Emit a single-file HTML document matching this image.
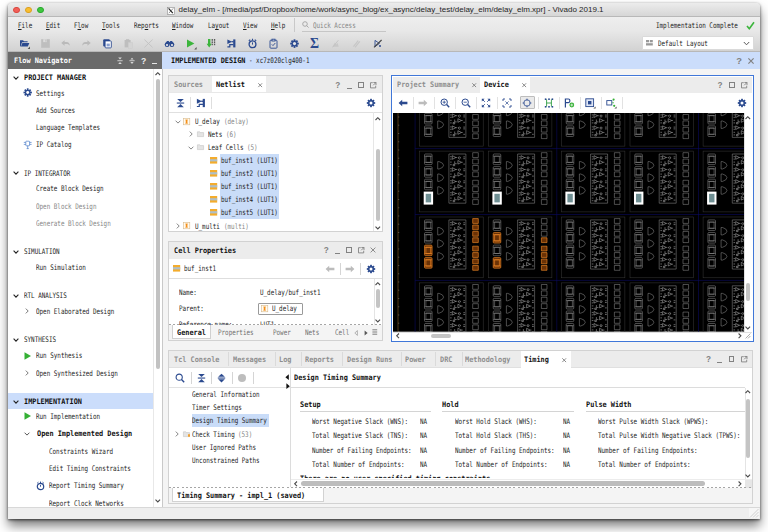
<!DOCTYPE html><html><head><meta charset="utf-8"><title>delay_elm - Vivado 2019.1</title><style>
*{box-sizing:border-box;margin:0;padding:0}
html,body{width:768px;height:532px;background:#fff;overflow:hidden}
body{position:relative;font-family:"DejaVu Sans Mono","Liberation Mono",monospace;font-size:7.6px;color:#222}
.a{position:absolute}
.t{position:absolute;white-space:pre;line-height:10px;height:10px;transform-origin:0 50%;transform:scaleX(0.7781);color:#222}
.b{font-weight:bold;transform:scaleX(0.9049);color:#111}
.g{color:#868686}
.w{color:#fff}
.u{text-decoration:underline}
#win{left:8px;top:2.7px;width:752px;height:516.3px;background:#f4f4f4;box-shadow:0 7px 11px rgba(0,0,0,.5),0 1px 3px rgba(0,0,0,.65);border-radius:4px 4px 0 0;overflow:hidden}
#title{left:0;top:0;width:752px;height:13.9px;background:linear-gradient(#ececec,#d6d6d6);border-bottom:.5px solid #b8b8b8}
#title span{position:absolute;left:170.6px;top:2.7px;font:8px "Liberation Sans",sans-serif;color:#262626;white-space:pre;line-height:10px}
.dot{position:absolute;top:4px;width:6.6px;height:6.6px;border-radius:50%}
#menubar{left:0;top:13.9px;width:752px;height:35.8px;background:linear-gradient(#eeeeee,#e8e8e8 40%,#d2d2d2);border-bottom:.6px solid #b8b8b8}
.panel{position:absolute;background:#fff;border:.5px solid #c8c8c8}
.tabbar{position:absolute;left:0;top:0;right:0;background:#ececec;border-bottom:.5px solid #d0d0d0}
.tab{position:absolute;top:0;background:#fff;height:100%}
.sel{position:absolute;background:#c9dcf8}
.sb{position:absolute;background:#c4c4c4;border-radius:2.5px}
.vs{position:absolute;width:.5px;background:#d0d0d0}
svg{position:absolute;overflow:visible}
</style></head><body>
<div class="a" id="win">
<div class="a" id="title"><span>delay_elm - [/media/psf/Dropbox/home/work/async_blog/ex_async/delay_test/delay_elm/delay_elm.xpr] - Vivado 2019.1</span></div>
<div class="a" id="menubar"></div>
</div>
<div class="dot" style="left:13.2px;top:6.6px;background:#f25f58;border:.5px solid #d9473f"></div>
<div class="dot" style="left:25.1px;top:6.6px;background:#f9bd2f;border:.5px solid #d9a022"></div>
<div class="dot" style="left:37.0px;top:6.6px;background:#3fc73f;border:.5px solid #2aa82f"></div>
<svg style="left:166.5px;top:6.7px" width="8" height="7.6" viewBox="0 0 8 7.6"><rect x=".3" y=".3" width="7.4" height="7" fill="#fff" stroke="#8a8a8a" stroke-width=".6"/><path d="M1.6 1.4L5.8 6.2" stroke="#222" stroke-width="1.2"/><path d="M6.2 1.4L1.8 6.2" stroke="#222" stroke-width=".5"/></svg>
<div class="t" style="left:18.2px;top:21.1px;"><span class="u">F</span>ile</div>
<div class="t" style="left:46.2px;top:21.1px;"><span class="u">E</span>dit</div>
<div class="t" style="left:74.2px;top:21.1px;">F<span class="u">l</span>ow</div>
<div class="t" style="left:102.2px;top:21.1px;"><span class="u">T</span>ools</div>
<div class="t" style="left:134.0px;top:21.1px;">Rep<span class="u">o</span>rts</div>
<div class="t" style="left:172.0px;top:21.1px;"><span class="u">W</span>indow</div>
<div class="t" style="left:207.5px;top:21.1px;">La<span class="u">y</span>out</div>
<div class="t" style="left:243.0px;top:21.1px;"><span class="u">V</span>iew</div>
<div class="t" style="left:270.5px;top:21.1px;"><span class="u">H</span>elp</div>
<div class="a" style="left:294.3px;top:18.0px;width:0.5px;height:14.0px;background:#c9c9c9;"></div>
<svg style="left:302.0px;top:21.0px" width="8" height="8" viewBox="0 0 8 8"><circle cx="3" cy="3" r="2.3" fill="none" stroke="#999" stroke-width=".8"/><path d="M4.7 4.7L6.6 6.6" stroke="#999" stroke-width=".8"/></svg>
<div class="t g" style="left:312.5px;top:20.6px;">Quick Access</div>
<div class="a" style="left:301.7px;top:30.9px;width:84.0px;height:0.6px;background:#c6c6c6;"></div>
<div class="t" style="left:656.3px;top:21.1px;">Implementation Complete</div>
<svg style="left:746.3px;top:20.6px" width="9" height="9" viewBox="0 0 9 9"><path d="M1 5L3.3 7.8L8 1.2" fill="none" stroke="#3cb53c" stroke-width="1.6" stroke-linejoin="round"/></svg>
<div class="a" style="left:642.2px;top:36.2px;width:112.3px;height:14.2px;background:#fff;border:.5px solid #dadada;border-radius:1px"></div>
<svg style="left:646.3px;top:40.0px" width="7" height="6" viewBox="0 0 7 6"><rect x="0" y="0" width="3" height="2.3" fill="#999"/><rect x="3.8" y="0" width="3" height="2.3" fill="#999"/><rect x="0" y="3.2" width="6.8" height="2.3" fill="#999"/></svg>
<div class="t" style="left:657.5px;top:38.9px;">Default Layout</div>
<svg style="left:742.5px;top:41.2px" width="7" height="5" viewBox="0 0 7 5"><path d="M.8 1L3.5 3.8L6.2 1" fill="none" stroke="#5a5a5a" stroke-width="1"/></svg>
<div class="a" style="left:8.0px;top:52.0px;width:154.0px;height:16.6px;background:#6a6a6a;"></div>
<div class="t b w" style="left:13.8px;top:56.3px;">Flow Navigator</div>
<div class="a" style="left:8.0px;top:69.0px;width:154.0px;height:438.0px;background:#fff;"></div>
<div class="a" style="left:153.4px;top:69.0px;width:0.5px;height:438.0px;background:#e8e8e8;"></div>
<div class="sb" style="left:155.5px;top:79.2px;width:4.7px;height:290px;background:#c2c2c2"></div>
<div class="a" style="left:8.0px;top:393.3px;width:145.4px;height:15.8px;background:#cbddfb;"></div>
<svg style="left:12.5px;top:75.8px" width="6" height="4" viewBox="0 0 6 4"><path d="M.6 .7L3 3.1L5.4 .7" fill="none" stroke="#222" stroke-width="1.1"/></svg>
<div class="t b" style="left:24.0px;top:73.1px;">PROJECT MANAGER</div>
<div class="t" style="left:36.3px;top:88.6px;">Settings</div>
<svg style="left:23.3px;top:88.4px" width="9" height="9" viewBox="0 0 9 9"><g transform="translate(4.7 4.5)"><g fill="#2b4a8f"><rect x="-.85" y="-4.2" width="1.7" height="8.4" transform="rotate(0)"/><rect x="-.85" y="-4.2" width="1.7" height="8.4" transform="rotate(45)"/><rect x="-.85" y="-4.2" width="1.7" height="8.4" transform="rotate(90)"/><rect x="-.85" y="-4.2" width="1.7" height="8.4" transform="rotate(135)"/><circle r="2.8"/></g><circle r="1.45" fill="#fff"/></g></svg>
<div class="t" style="left:36.3px;top:105.9px;">Add Sources</div>
<div class="t" style="left:36.3px;top:123.1px;">Language Templates</div>
<div class="t" style="left:36.3px;top:140.4px;">IP Catalog</div>
<svg style="left:23.0px;top:140.0px" width="9" height="10" viewBox="0 0 9 10"><g fill="none" stroke="#4a7cc8" stroke-width=".7"><rect x="2.8" y="1.2" width="3.8" height="4.6" rx=".6"/><path d="M.8 2.4H2.8M.8 4.4H2.8M6.6 2.4H8.6M6.6 4.4H8.6M4.7 5.8V8.6M3.6 8.6H5.8"/></g></svg>
<svg style="left:12.5px;top:171.3px" width="6" height="4" viewBox="0 0 6 4"><path d="M.6 .7L3 3.1L5.4 .7" fill="none" stroke="#222" stroke-width="1.1"/></svg>
<div class="t" style="left:24.0px;top:168.6px;">IP INTEGRATOR</div>
<div class="t" style="left:36.3px;top:184.4px;">Create Block Design</div>
<div class="t g" style="left:36.3px;top:201.6px;">Open Block Design</div>
<div class="t g" style="left:36.3px;top:218.9px;">Generate Block Design</div>
<svg style="left:12.5px;top:250.0px" width="6" height="4" viewBox="0 0 6 4"><path d="M.6 .7L3 3.1L5.4 .7" fill="none" stroke="#222" stroke-width="1.1"/></svg>
<div class="t" style="left:24.0px;top:247.3px;">SIMULATION</div>
<div class="t" style="left:36.3px;top:262.9px;">Run Simulation</div>
<svg style="left:12.5px;top:294.1px" width="6" height="4" viewBox="0 0 6 4"><path d="M.6 .7L3 3.1L5.4 .7" fill="none" stroke="#222" stroke-width="1.1"/></svg>
<div class="t" style="left:24.0px;top:291.4px;">RTL ANALYSIS</div>
<svg style="left:24.5px;top:308.3px" width="4" height="6" viewBox="0 0 4 6"><path d="M.8 .6L3.2 3L.8 5.4" fill="none" stroke="#555" stroke-width="0.8"/></svg>
<div class="t" style="left:36.2px;top:306.9px;">Open Elaborated Design</div>
<svg style="left:12.5px;top:338.1px" width="6" height="4" viewBox="0 0 6 4"><path d="M.6 .7L3 3.1L5.4 .7" fill="none" stroke="#222" stroke-width="1.1"/></svg>
<div class="t" style="left:24.0px;top:335.4px;">SYNTHESIS</div>
<div class="t" style="left:36.3px;top:351.1px;">Run Synthesis</div>
<svg style="left:24.0px;top:351.5px" width="8" height="8" viewBox="0 0 8 8"><path d="M.5 .3L7 4L.5 7.7Z" fill="#35b035"/></svg>
<svg style="left:24.5px;top:369.9px" width="4" height="6" viewBox="0 0 4 6"><path d="M.8 .6L3.2 3L.8 5.4" fill="none" stroke="#555" stroke-width="0.8"/></svg>
<div class="t" style="left:36.2px;top:368.5px;">Open Synthesized Design</div>
<svg style="left:12.5px;top:399.5px" width="6" height="4" viewBox="0 0 6 4"><path d="M.6 .7L3 3.1L5.4 .7" fill="none" stroke="#222" stroke-width="1.1"/></svg>
<div class="t b" style="left:24.0px;top:396.8px;">IMPLEMENTATION</div>
<div class="t" style="left:36.3px;top:412.0px;">Run Implementation</div>
<svg style="left:24.0px;top:412.4px" width="8" height="8" viewBox="0 0 8 8"><path d="M.5 .3L7 4L.5 7.7Z" fill="#35b035"/></svg>
<svg style="left:23.7px;top:432.1px" width="6" height="4" viewBox="0 0 6 4"><path d="M.6 .7L3 3.1L5.4 .7" fill="none" stroke="#444" stroke-width="0.9"/></svg>
<div class="t b" style="left:36.7px;top:429.4px;">Open Implemented Design</div>
<div class="t" style="left:48.9px;top:446.9px;">Constraints Wizard</div>
<div class="t" style="left:48.9px;top:464.2px;">Edit Timing Constraints</div>
<div class="t" style="left:48.9px;top:481.4px;">Report Timing Summary</div>
<svg style="left:35.5px;top:480.8px" width="9" height="10" viewBox="0 0 9 10"><g fill="none" stroke="#2b4a8f"><circle cx="4.5" cy="5.5" r="3.2" stroke-width="1.2"/><path d="M4.5 3.8V5.7" stroke-width=".9"/><path d="M1.2 2.2L2.4 1.2M7.8 2.2L6.6 1.2M4.5 .6V2" stroke-width="1"/></g></svg>
<div class="t" style="left:48.9px;top:498.6px;">Report Clock Networks</div>
<div class="a" style="left:8.0px;top:507.0px;width:752.0px;height:12.0px;background:#eeeeee;"></div>
<div class="a" style="left:8.0px;top:506.7px;width:752.0px;height:0.5px;background:#d8d8d8;"></div>
<div class="a" style="left:162.0px;top:52.0px;width:598.0px;height:16.6px;background:#cbddfb;"></div>
<div class="t b" style="left:170.5px;top:56.3px;">IMPLEMENTED DESIGN</div>
<div class="t" style="left:248.7px;top:56.3px;">- xc7z020clg400-1</div>
<svg style="left:18.8px;top:38.0px" width="11" height="11" viewBox="0 0 11 11"><path d="M1 2.2H4L5 3.2H8.6V4.3H3L1.6 8.4H1Z" fill="#2b4a8f"/><path d="M3.4 5H10.4L8.8 8.6H1.9Z" fill="#2b4a8f"/><path d="M8.6 11L11 11L11 8.6Z" fill="#555"/></svg>
<svg style="left:39.5px;top:38.0px" width="11" height="11" viewBox="0 0 11 11"><path d="M1.2 1.2H9.8V9.8H1.2Z" fill="#bebebe"/><rect x="3.2" y="1.2" width="3.8" height="2.9" fill="#dcdcdc"/><rect x="5.4" y="1.6" width="1.1" height="2.1" fill="#bebebe"/></svg>
<svg style="left:60.3px;top:38.0px" width="11" height="11" viewBox="0 0 11 11"><path d="M1.2 5L4.6 2.2V4H6.5C8.6 4 9.8 5.4 9.8 7.8C9 6.5 8 6 6.5 6H4.6V7.8Z" fill="#bababa"/></svg>
<svg style="left:81.0px;top:38.0px" width="11" height="11" viewBox="0 0 11 11"><path d="M9.8 5L6.4 2.2V4H4.5C2.4 4 1.2 5.4 1.2 7.8C2 6.5 3 6 4.5 6H6.4V7.8Z" fill="#bababa"/></svg>
<svg style="left:101.8px;top:38.0px" width="11" height="11" viewBox="0 0 11 11"><rect x="1.2" y="1.2" width="6.6" height="7.4" rx="1" fill="#2b4a8f"/><rect x="3.1" y="2.9" width="6.2" height="7" rx=".8" fill="#fff" stroke="#2b4a8f" stroke-width=".9"/><rect x="4.6" y="5.6" width="3.2" height="2.8" fill="#8aa0cf"/></svg>
<svg style="left:122.6px;top:38.0px" width="11" height="11" viewBox="0 0 11 11"><rect x="1.6" y="2" width="6" height="7.4" fill="#bebebe"/><rect x="3" y="1.2" width="3.2" height="1.6" fill="#bebebe"/><rect x="5.2" y="4.4" width="4.4" height="5.8" fill="#d4d4d4" stroke="#c8c8c8" stroke-width=".4"/></svg>
<svg style="left:143.3px;top:38.0px" width="11" height="11" viewBox="0 0 11 11"><path d="M1.4 1.6L9.6 9.4M9.6 1.6L1.4 9.4" stroke="#c2c2c2" stroke-width=".9" fill="none"/></svg>
<svg style="left:164.1px;top:38.0px" width="11" height="11" viewBox="0 0 11 11"><g fill="#2b4a8f"><ellipse cx="3.1" cy="6.4" rx="2.4" ry="2.5"/><ellipse cx="7.9" cy="6.4" rx="2.4" ry="2.5"/><path d="M2 4.4L3 2.9H4.6L5.5 4.2L6.4 2.9H8L9 4.4V6H2Z"/></g><ellipse cx="3" cy="7" rx="1.1" ry="1" fill="#e8e8e8"/><ellipse cx="8" cy="7" rx="1.1" ry="1" fill="#e8e8e8"/></svg>
<svg style="left:184.8px;top:38.0px" width="11" height="11" viewBox="0 0 11 11"><path d="M2 1.4L9.4 5.4L2 9.4Z" fill="#3cb53c"/><path d="M9.2 11.4L11.6 11.4L11.6 9Z" fill="#555"/></svg>
<svg style="left:205.6px;top:38.0px" width="11" height="11" viewBox="0 0 11 11"><path d="M2 1H4.4V5.8H5.8L3.2 9.4L.6 5.8H2Z" fill="#3cb53c"/><g fill="#5a5a5a"><rect x="5.6" y="1" width="1.3" height="1.8"/><rect x="7.9" y="1" width="1.3" height="1.8"/><rect x="5.6" y="3.4" width="1.3" height="1.8"/><rect x="7.9" y="3.4" width="1.3" height="1.8"/><rect x="5.6" y="5.8" width="1.3" height="1.4"/><rect x="7.9" y="5.8" width="1.3" height="1.4"/></g></svg>
<svg style="left:226.3px;top:38.0px" width="11" height="11" viewBox="0 0 11 11"><g fill="#2b4a8f"><rect x="7.2" y="1.4" width="2.2" height="8"/><path d="M1.4 1.4L6.2 3.7L1.4 6Z"/><rect x="5.6" y="3.1" width="2" height="1.2"/></g><path d="M1.4 8.8H3.8V6.6H7.4" fill="none" stroke="#2b4a8f" stroke-width="1.2"/></svg>
<svg style="left:247.1px;top:38.0px" width="11" height="11" viewBox="0 0 11 11"><g fill="none" stroke="#2b4a8f"><circle cx="5.5" cy="6.3" r="3.4" stroke-width="1.3"/><path d="M5.5 4.4V6.6" stroke-width="1"/><path d="M1.8 2.8L3.2 1.6M9.2 2.8L7.8 1.6M5.5 .8V2.6" stroke-width="1.1"/></g></svg>
<svg style="left:267.8px;top:38.0px" width="11" height="11" viewBox="0 0 11 11"><g fill="none" stroke="#2b4a8f" stroke-width=".9"><rect x="2" y="2.2" width="7" height="8" rx=".8"/><rect x="4" y="1.2" width="3" height="1.8" fill="#e8e8e8"/><path d="M3.8 6.4L5 7.6L7.3 5"/></g></svg>
<svg style="left:288.6px;top:38.0px" width="11" height="11" viewBox="0 0 11 11"><g transform="translate(5.5 5.6)"><g fill="#2b4a8f"><rect x="-.9" y="-4.3" width="1.8" height="8.6" transform="rotate(0)"/><rect x="-.9" y="-4.3" width="1.8" height="8.6" transform="rotate(45)"/><rect x="-.9" y="-4.3" width="1.8" height="8.6" transform="rotate(90)"/><rect x="-.9" y="-4.3" width="1.8" height="8.6" transform="rotate(135)"/><circle r="3"/></g><circle r="1.55" fill="#e6e6e6"/></g></svg>
<svg style="left:309.3px;top:38.0px" width="11" height="11" viewBox="0 0 11 11"><text x=".9" y="10.2" font-family="Liberation Serif,serif" font-weight="bold" font-size="13.8" fill="#2b4a8f">Σ</text></svg>
<svg style="left:330.1px;top:38.0px" width="11" height="11" viewBox="0 0 11 11"><path d="M2.4 8.8L5 4.4L6.2 6.4L7.6 5L8.8 8.8Z" fill="#c8c8c8"/><path d="M2.6 9.4L8.4 2.2" stroke="#c2c2c2" stroke-width=".8"/></svg>
<svg style="left:350.8px;top:38.0px" width="11" height="11" viewBox="0 0 11 11"><path d="M2.4 8.6L7.2 2.6M4 9.4L8.8 3.4" stroke="#c6c6c6" stroke-width="1.1"/></svg>
<svg style="left:371.6px;top:38.0px" width="11" height="11" viewBox="0 0 11 11"><path d="M3 2.4L7.4 5.4L3 8.6Z" fill="none" stroke="#2b4a8f" stroke-width=".9"/><circle cx="8" cy="8" r="1" fill="#2b4a8f"/><path d="M2 9.4L9.6 2" stroke="#444" stroke-width="1.1"/></svg>
<div class="a" style="left:162.0px;top:69.0px;width:0.5px;height:438.0px;background:#c9c9c9;"></div>
<svg style="left:155.2px;top:72.0px" width="5.6" height="3.6" viewBox="0 0 5.6 3.6"><path d="M.5 3L2.8 .7L5.1 3" fill="none" stroke="#4a4a4a" stroke-width="1.1"/></svg>
<svg style="left:155.2px;top:498.7px" width="5.6" height="3.6" viewBox="0 0 5.6 3.6"><path d="M.5 .6L2.8 2.9L5.1 .6" fill="none" stroke="#4a4a4a" stroke-width="1.1"/></svg>
<svg style="left:117.0px;top:56.8px" width="6" height="8" viewBox="0 0 6 8"><g fill="#d8d8d8"><path d="M1.2 .6H4.8L3 2.5Z"/><rect x=".4" y="3.3" width="5.2" height=".9"/><path d="M1.2 7H4.8L3 5.1Z"/></g></svg>
<svg style="left:128.6px;top:56.8px" width="6" height="8" viewBox="0 0 6 8"><g fill="#d8d8d8"><path d="M1.4 2.6H4.6L3 .7Z"/><rect x=".4" y="3.3" width="5.2" height=".9"/><path d="M1.4 5H4.6L3 6.9Z"/></g></svg>
<div class="t" style="left:141.0px;top:56.3px;font-size:8.6px;color:#eee;transform:none;font-family:Liberation Sans,sans-serif;font-weight:bold">?</div>
<div class="a" style="left:151.5px;top:63.2px;width:5.6px;height:1.1px;background:#e6e6e6;"></div>
<div class="t" style="left:736.2px;top:56.0px;font-size:9.4px;color:#808080;transform:none;font-family:Liberation Sans,sans-serif;font-weight:bold">?</div>
<svg style="left:748.1px;top:57.8px" width="6" height="6" viewBox="0 0 6 6"><path d="M.4 .4L5.6 5.6M5.6 .4L.4 5.6" stroke="#808080" stroke-width="1.15"/></svg>
<div class="panel" style="left:168.3px;top:75.2px;width:214.9px;height:157px"></div>
<div class="a" style="left:168.8px;top:75.7px;width:213.9px;height:16.3px;background:#ececec;"></div>
<div class="a" style="left:168.8px;top:92.0px;width:213.9px;height:0.5px;background:#e8e8e8;"></div>
<div class="a" style="left:212.2px;top:75.7px;width:54.0px;height:16.8px;background:#fff;"></div>
<div class="t b" style="left:173.8px;top:80.2px;color:#8e8e8e">Sources</div>
<div class="t b" style="left:215.8px;top:80.2px;">Netlist</div>
<svg style="left:258.0px;top:83.3px" width="4.4" height="4.4" viewBox="0 0 4.4 4.4"><path d="M.3 .3L4.1 4.1M4.1 .3L.3 4.1" stroke="#777" stroke-width=".85"/></svg>
<div class="t" style="left:335.3px;top:80.8px;font-size:8.2px;color:#828282;transform:none;font-family:Liberation Sans,sans-serif;font-weight:bold">?</div>
<div class="a" style="left:346.6px;top:87.5px;width:5.4px;height:1.1px;background:#828282;"></div>
<div class="a" style="left:358.1px;top:82.2px;width:5.8px;height:5.8px;border:.8px solid #828282"></div>
<svg style="left:370.0px;top:82.0px" width="6.4" height="6.4" viewBox="0 0 6.4 6.4"><path d="M2.8 .7H.5V5.9H5.7V3.8" fill="none" stroke="#828282" stroke-width=".9"/><path d="M3.4 .5H6V3.1M6 .5L3.2 3.3" fill="none" stroke="#828282" stroke-width=".9"/></svg>
<svg style="left:175.8px;top:97.5px" width="9" height="10" viewBox="0 0 9 10"><g fill="#2b4a8f"><path d="M1.2 .9H7.8L4.5 4Z"/><rect x=".8" y="4.5" width="7.4" height="1.1"/><path d="M1.2 9.2H7.8L4.5 6.1Z"/></g></svg>
<div class="a" style="left:190.2px;top:97.0px;width:0.5px;height:12.0px;background:#dedede;"></div>
<svg style="left:195.8px;top:97.7px" width="10" height="10" viewBox="0 0 9.2 9.2"><g fill="#2b4a8f"><rect x="6.2" y=".8" width="2" height="7.6"/><path d="M.8 .8L5.4 3L.8 5.2Z"/><rect x="4.8" y="2.4" width="1.8" height="1.2"/></g><path d="M.8 7.8H3V5.8H6.4" fill="none" stroke="#2b4a8f" stroke-width="1.1"/></svg>
<div class="a" style="left:210.7px;top:97.0px;width:0.5px;height:12.0px;background:#dedede;"></div>
<svg style="left:366.2px;top:97.7px" width="10" height="10" viewBox="0 0 10 10"><g transform="translate(5 5) scale(1.0)"><g fill="#2b4a8f"><rect x="-.9" y="-4.2" width="1.8" height="8.4" transform="rotate(0)"/><rect x="-.9" y="-4.2" width="1.8" height="8.4" transform="rotate(45)"/><rect x="-.9" y="-4.2" width="1.8" height="8.4" transform="rotate(90)"/><rect x="-.9" y="-4.2" width="1.8" height="8.4" transform="rotate(135)"/><circle r="2.9"/></g><circle r="1.5" fill="#fff"/></g></svg>
<div class="a" style="left:168.8px;top:111.7px;width:213.9px;height:0.6px;background:#e0e0e0;"></div>
<div class="a" style="left:373.3px;top:112.3px;width:0.5px;height:119.7px;background:#e6e6e6;"></div>
<svg style="left:375.0px;top:116.7px" width="5.6" height="3.6" viewBox="0 0 5.6 3.6"><path d="M.5 3L2.8 .7L5.1 3" fill="none" stroke="#4a4a4a" stroke-width="1.1"/></svg>
<svg style="left:375.0px;top:225.7px" width="5.6" height="3.6" viewBox="0 0 5.6 3.6"><path d="M.5 .6L2.8 2.9L5.1 .6" fill="none" stroke="#4a4a4a" stroke-width="1.1"/></svg>
<div class="sb" style="left:375.6px;top:148.5px;width:4px;height:72px"></div>
<div class="a" style="left:220.0px;top:153.9px;width:58.8px;height:65.3px;background:#c9dcf8;"></div>
<svg style="left:175.0px;top:119.5px" width="6" height="4" viewBox="0 0 6 4"><path d="M.6 .7L3 3.1L5.4 .7" fill="none" stroke="#666" stroke-width="0.8"/></svg>
<svg style="left:183.0px;top:117.7px" width="7.2" height="7.2" viewBox="0 0 7.2 7.2"><rect x=".4" y=".4" width="6.4" height="6.4" fill="#fffaf0" stroke="#d8b98a" stroke-width=".6"/><path d="M2.6 1.7H4.6V2.3H4.3V4.9H4.6V5.5H2.6V4.9H2.9V2.3H2.6Z" fill="#f5921e" stroke="#f5921e" stroke-width=".3"/></svg>
<div class="t" style="left:195.2px;top:116.9px;">U_delay</div>
<div class="t g" style="left:223.7px;top:116.9px;">(delay)</div>
<svg style="left:188.8px;top:131.4px" width="4" height="6" viewBox="0 0 4 6"><path d="M.8 .6L3.2 3L.8 5.4" fill="none" stroke="#666" stroke-width="0.8"/></svg>
<svg style="left:196.5px;top:131.4px" width="7" height="6" viewBox="0 0 7 6"><path d="M.4 .8H2.8L3.5 1.6H6.6V5.6H.4Z" fill="#e4e4e4" stroke="#bdbdbd" stroke-width=".5"/></svg>
<div class="t" style="left:208.0px;top:130.0px;">Nets</div>
<div class="t g" style="left:225.8px;top:130.0px;">(6)</div>
<svg style="left:187.8px;top:145.6px" width="6" height="4" viewBox="0 0 6 4"><path d="M.6 .7L3 3.1L5.4 .7" fill="none" stroke="#666" stroke-width="0.8"/></svg>
<svg style="left:196.5px;top:144.4px" width="7" height="6" viewBox="0 0 7 6"><path d="M.4 .8H2.8L3.5 1.6H6.6V5.6H.4Z" fill="#e4e4e4" stroke="#bdbdbd" stroke-width=".5"/></svg>
<div class="t" style="left:208.0px;top:143.0px;">Leaf Cells</div>
<div class="t g" style="left:247.2px;top:143.0px;">(5)</div>
<svg style="left:209.8px;top:156.8px" width="7.2" height="6.6" viewBox="0 0 7.2 6.6"><rect width="7.2" height="6.6" fill="#f4ac2c"/><rect y="2.2" width="7.2" height="2.2" fill="#aebfca"/></svg>
<div class="t" style="left:221.3px;top:156.1px;">buf_inst1 (LUT1)</div>
<svg style="left:209.8px;top:169.9px" width="7.2" height="6.6" viewBox="0 0 7.2 6.6"><rect width="7.2" height="6.6" fill="#f4ac2c"/><rect y="2.2" width="7.2" height="2.2" fill="#aebfca"/></svg>
<div class="t" style="left:221.3px;top:169.2px;">buf_inst2 (LUT1)</div>
<svg style="left:209.8px;top:182.9px" width="7.2" height="6.6" viewBox="0 0 7.2 6.6"><rect width="7.2" height="6.6" fill="#f4ac2c"/><rect y="2.2" width="7.2" height="2.2" fill="#aebfca"/></svg>
<div class="t" style="left:221.3px;top:182.2px;">buf_inst3 (LUT1)</div>
<svg style="left:209.8px;top:196.0px" width="7.2" height="6.6" viewBox="0 0 7.2 6.6"><rect width="7.2" height="6.6" fill="#f4ac2c"/><rect y="2.2" width="7.2" height="2.2" fill="#aebfca"/></svg>
<div class="t" style="left:221.3px;top:195.3px;">buf_inst4 (LUT1)</div>
<svg style="left:209.8px;top:209.1px" width="7.2" height="6.6" viewBox="0 0 7.2 6.6"><rect width="7.2" height="6.6" fill="#f4ac2c"/><rect y="2.2" width="7.2" height="2.2" fill="#aebfca"/></svg>
<div class="t" style="left:221.3px;top:208.4px;">buf_inst5 (LUT1)</div>
<svg style="left:176.0px;top:222.9px" width="4" height="6" viewBox="0 0 4 6"><path d="M.8 .6L3.2 3L.8 5.4" fill="none" stroke="#666" stroke-width="0.8"/></svg>
<svg style="left:183.0px;top:222.3px" width="7.2" height="7.2" viewBox="0 0 7.2 7.2"><rect x=".4" y=".4" width="6.4" height="6.4" fill="#fffaf0" stroke="#d8b98a" stroke-width=".6"/><path d="M2.6 1.7H4.6V2.3H4.3V4.9H4.6V5.5H2.6V4.9H2.9V2.3H2.6Z" fill="#f5921e" stroke="#f5921e" stroke-width=".3"/></svg>
<div class="t" style="left:195.2px;top:221.5px;">U_multi</div>
<div class="t g" style="left:223.7px;top:221.5px;">(multi)</div>
<div class="a" style="left:168.0px;top:232.5px;width:216.0px;height:8.4px;background:#f4f4f4;"></div>
<div class="panel" style="left:168.3px;top:241.2px;width:214.9px;height:99.9px"></div>
<div class="a" style="left:168.8px;top:241.7px;width:213.9px;height:17.0px;background:#ececec;"></div>
<div class="t b" style="left:173.8px;top:245.9px;">Cell Properties</div>
<div class="t" style="left:323.7px;top:245.9px;font-size:8.2px;color:#828282;transform:none;font-family:Liberation Sans,sans-serif;font-weight:bold">?</div>
<div class="a" style="left:334.9px;top:252.6px;width:5.4px;height:1.1px;background:#828282;"></div>
<div class="a" style="left:346.1px;top:247.3px;width:5.8px;height:5.8px;border:.8px solid #828282"></div>
<svg style="left:358.0px;top:247.1px" width="6.4" height="6.4" viewBox="0 0 6.4 6.4"><path d="M2.8 .7H.5V5.9H5.7V3.8" fill="none" stroke="#828282" stroke-width=".9"/><path d="M3.4 .5H6V3.1M6 .5L3.2 3.3" fill="none" stroke="#828282" stroke-width=".9"/></svg>
<svg style="left:370.0px;top:247.3px" width="6" height="6" viewBox="0 0 6 6"><path d="M.6 .6L5.4 5.4M5.4 .6L.6 5.4" stroke="#828282" stroke-width=".9"/></svg>
<svg style="left:173.0px;top:265.1px" width="7.2" height="6.6" viewBox="0 0 7.2 6.6"><rect width="7.2" height="6.6" fill="#f4ac2c"/><rect y="2.2" width="7.2" height="2.2" fill="#aebfca"/></svg>
<div class="t" style="left:183.8px;top:264.4px;">buf_inst1</div>
<svg style="left:325.0px;top:265.0px" width="10" height="8" viewBox="0 0 10 8"><path d="M.6 4L4.2 .8V2.8H9.4V5.2H4.2V7.2Z" fill="#bcbcbc"/></svg>
<svg style="left:345.0px;top:265.0px" width="10" height="8" viewBox="0 0 10 8"><path d="M9.4 4L5.8 .8V2.8H.6V5.2H5.8V7.2Z" fill="#bcbcbc"/></svg>
<div class="a" style="left:339.7px;top:263.0px;width:0.5px;height:12.0px;background:#d5d5d5;"></div>
<div class="a" style="left:360.0px;top:263.0px;width:0.5px;height:12.0px;background:#d5d5d5;"></div>
<svg style="left:366.3px;top:263.8px" width="10" height="10" viewBox="0 0 10 10"><g transform="translate(5 5) scale(1.0)"><g fill="#2b4a8f"><rect x="-.9" y="-4.2" width="1.8" height="8.4" transform="rotate(0)"/><rect x="-.9" y="-4.2" width="1.8" height="8.4" transform="rotate(45)"/><rect x="-.9" y="-4.2" width="1.8" height="8.4" transform="rotate(90)"/><rect x="-.9" y="-4.2" width="1.8" height="8.4" transform="rotate(135)"/><circle r="2.9"/></g><circle r="1.5" fill="#fff"/></g></svg>
<div class="a" style="left:168.8px;top:278.0px;width:213.9px;height:0.5px;background:#dedede;"></div>
<div class="t" style="left:178.8px;top:288.1px;">Name:</div>
<div class="t" style="left:260.0px;top:288.1px;">U_delay/buf_inst1</div>
<div class="t" style="left:178.8px;top:303.7px;">Parent:</div>
<div class="a" style="left:257.5px;top:303px;width:45px;height:12.2px;border:.6px solid #9a9a9a;border-radius:1px;background:#fff"></div>
<svg style="left:260.7px;top:305.4px" width="7.2" height="7.2" viewBox="0 0 7.2 7.2"><rect x=".4" y=".4" width="6.4" height="6.4" fill="#fffaf0" stroke="#d8b98a" stroke-width=".6"/><path d="M2.6 1.7H4.6V2.3H4.3V4.9H4.6V5.5H2.6V4.9H2.9V2.3H2.6Z" fill="#f5921e" stroke="#f5921e" stroke-width=".3"/></svg>
<div class="t" style="left:271.5px;top:304.4px;">U_delay</div>
<div class="a" style="left:168.8px;top:318.5px;width:204px;height:6px;overflow:hidden"><div class="t" style="left:10px;top:1px">Reference name:</div><div class="t" style="left:91.2px;top:1px">LUT1</div></div>
<div class="a" style="left:168.8px;top:323.9px;width:213.9px;height:.9px;background:repeating-linear-gradient(90deg,#a6a6a6 0 2px,transparent 2px 4.2px)"></div>
<div class="a" style="left:373.5px;top:278.5px;width:0.5px;height:46.0px;background:#e4e4e4;"></div>
<svg style="left:375.0px;top:282.0px" width="5.6" height="3.6" viewBox="0 0 5.6 3.6"><path d="M.5 3L2.8 .7L5.1 3" fill="none" stroke="#4a4a4a" stroke-width="1.1"/></svg>
<svg style="left:375.0px;top:318.8px" width="5.6" height="3.6" viewBox="0 0 5.6 3.6"><path d="M.5 .6L2.8 2.9L5.1 .6" fill="none" stroke="#4a4a4a" stroke-width="1.1"/></svg>
<div class="sb" style="left:375.6px;top:289.4px;width:4px;height:18.6px"></div>
<div class="a" style="left:168.8px;top:324.8px;width:213.9px;height:15.8px;background:#f4f4f4;"></div>
<div class="a" style="left:172.3px;top:325px;width:38.5px;height:14.2px;background:#fff;border:.6px solid #d0d0d0;border-top:none"></div>
<div class="t b" style="left:176.5px;top:327.9px;">General</div>
<div class="t" style="left:217.8px;top:327.9px;color:#6e6e6e">Properties</div>
<div class="t" style="left:272.5px;top:327.9px;color:#6e6e6e">Power</div>
<div class="t" style="left:305.3px;top:327.9px;color:#6e6e6e">Nets</div>
<div class="t" style="left:335.0px;top:327.9px;color:#6e6e6e">Cell</div>
<svg style="left:354.0px;top:329.5px" width="4" height="6" viewBox="0 0 4 6"><path d="M3.4 .6L.8 3L3.4 5.4Z" fill="none" stroke="#888" stroke-width=".6"/></svg>
<svg style="left:363.5px;top:329.5px" width="4" height="6" viewBox="0 0 4 6"><path d="M.6 .4L3.6 3L.6 5.6Z" fill="#555"/></svg>
<svg style="left:372.0px;top:329.3px" width="6" height="6" viewBox="0 0 6 6"><path d="M.4 .8H5.2M.4 3H5.2M.4 5.2H5.2" stroke="#666" stroke-width=".85"/></svg>
<div class="a" style="left:391.2px;top:75.2px;width:362.90000000000003px;height:266.6px;background:#fff;border:1.7px solid #4077d8"></div>
<div class="a" style="left:392.6px;top:76.6px;width:359.8px;height:16.3px;background:#ececec;"></div>
<div class="a" style="left:480.0px;top:76.6px;width:50.3px;height:16.5px;background:#fff;"></div>
<div class="t b" style="left:396.6px;top:80.3px;color:#8e8e8e">Project Summary</div>
<svg style="left:471.8px;top:83.3px" width="4.4" height="4.4" viewBox="0 0 4.4 4.4"><path d="M.3 .3L4.1 4.1M4.1 .3L.3 4.1" stroke="#777" stroke-width=".85"/></svg>
<div class="t b" style="left:483.5px;top:80.3px;">Device</div>
<svg style="left:522.1px;top:83.3px" width="4.4" height="4.4" viewBox="0 0 4.4 4.4"><path d="M.3 .3L4.1 4.1M4.1 .3L.3 4.1" stroke="#777" stroke-width=".85"/></svg>
<div class="t" style="left:717.4px;top:80.8px;font-size:8.2px;color:#828282;transform:none;font-family:Liberation Sans,sans-serif;font-weight:bold">?</div>
<div class="a" style="left:728.8px;top:82.2px;width:5.8px;height:5.8px;border:.8px solid #828282"></div>
<svg style="left:740.8px;top:82.0px" width="6.4" height="6.4" viewBox="0 0 6.4 6.4"><path d="M2.8 .7H.5V5.9H5.7V3.8" fill="none" stroke="#828282" stroke-width=".9"/><path d="M3.4 .5H6V3.1M6 .5L3.2 3.3" fill="none" stroke="#828282" stroke-width=".9"/></svg>
<div class="a" style="left:413.0px;top:96.5px;width:0.5px;height:12.5px;background:#e2e2e2;"></div>
<div class="a" style="left:434.0px;top:96.5px;width:0.5px;height:12.5px;background:#e2e2e2;"></div>
<div class="a" style="left:455.0px;top:96.5px;width:0.5px;height:12.5px;background:#e2e2e2;"></div>
<div class="a" style="left:475.6px;top:96.5px;width:0.5px;height:12.5px;background:#e2e2e2;"></div>
<div class="a" style="left:496.6px;top:96.5px;width:0.5px;height:12.5px;background:#e2e2e2;"></div>
<div class="a" style="left:538.0px;top:96.5px;width:0.5px;height:12.5px;background:#e2e2e2;"></div>
<div class="a" style="left:559.0px;top:96.5px;width:0.5px;height:12.5px;background:#e2e2e2;"></div>
<div class="a" style="left:579.7px;top:96.5px;width:0.5px;height:12.5px;background:#e2e2e2;"></div>
<div class="a" style="left:600.8px;top:96.5px;width:0.5px;height:12.5px;background:#e2e2e2;"></div>
<div class="a" style="left:621.9px;top:96.5px;width:0.5px;height:12.5px;background:#e2e2e2;"></div>
<svg style="left:398.1px;top:98.9px" width="10" height="8" viewBox="0 0 10 8"><path d="M.6 4L4.2 .8V2.8H9.4V5.2H4.2V7.2Z" fill="#2b4a8f"/></svg>
<svg style="left:418.0px;top:98.9px" width="10" height="8" viewBox="0 0 10 8"><path d="M9.4 4L5.8 .8V2.8H.6V5.2H5.8V7.2Z" fill="#bcbcbc"/></svg>
<svg style="left:439.5px;top:97.9px" width="10" height="10" viewBox="0 0 10 10"><circle cx="4.2" cy="4.2" r="3.2" fill="none" stroke="#2b4a8f" stroke-width="1"/><path d="M6.6 6.6L9.2 9.2" stroke="#2b4a8f" stroke-width="1.4"/><path d="M2.6 4.2H5.8M4.2 2.6V5.8" stroke="#2b4a8f" stroke-width=".8"/></svg>
<svg style="left:460.6px;top:97.9px" width="10" height="10" viewBox="0 0 10 10"><circle cx="4.2" cy="4.2" r="3.2" fill="none" stroke="#2b4a8f" stroke-width="1"/><path d="M6.6 6.6L9.2 9.2" stroke="#2b4a8f" stroke-width="1.4"/><path d="M2.6 4.2H5.8" stroke="#2b4a8f" stroke-width=".8"/></svg>
<svg style="left:481.1px;top:97.9px" width="10" height="10" viewBox="0 0 10 10"><g fill="#2b4a8f"><path d="M.8 .8H3.6L.8 3.6Z"/><path d="M9.2 .8H6.4L9.2 3.6Z"/><path d="M.8 9.2H3.6L.8 6.4Z"/><path d="M9.2 9.2H6.4L9.2 6.4Z"/></g><path d="M1.5 1.5L3.8 3.8M8.5 1.5L6.2 3.8M1.5 8.5L3.8 6.2M8.5 8.5L6.2 6.2" stroke="#2b4a8f" stroke-width=".9"/></svg>
<svg style="left:501.6px;top:97.9px" width="10" height="10" viewBox="0 0 10 10"><g fill="none" stroke="#2b4a8f" stroke-width=".9"><path d="M1 3V1H3M7 1H9V3M9 7V9H7M3 9H1V7"/><path d="M3.4 3.4L6.6 6.6M6.6 3.4L3.4 6.6" stroke-width=".7"/></g></svg>
<div class="a" style="left:520px;top:95.6px;width:14.8px;height:13.8px;background:#eaeaea;border:.6px solid #bdbdbd;border-radius:1px"></div>
<svg style="left:522.4px;top:97.9px" width="10" height="10" viewBox="0 0 10 10"><g fill="none" stroke="#2b4a8f"><circle cx="5" cy="5" r="3.2" stroke-width=".8"/><path d="M5 .6V2.6M5 7.4V9.4M.6 5H2.6M7.4 5H9.4" stroke-width=".8"/></g></svg>
<svg style="left:543.5px;top:97.9px" width="10" height="10" viewBox="0 0 10 10"><g stroke="#2f9e44" stroke-width=".9" fill="none"><path d="M2.6 1.4V8.6M7.4 1.4V8.6M2.6 5H7.4"/></g><g fill="#2b4a8f"><rect x=".8" y=".4" width="1.6" height="1.6"/><rect x="4.2" y=".4" width="1.6" height="1.6"/><rect x="7.6" y=".4" width="1.6" height="1.6"/><rect x=".8" y="8" width="1.6" height="1.6"/><rect x="4.2" y="8" width="1.6" height="1.6"/><rect x="7.6" y="8" width="1.6" height="1.6"/></g></svg>
<svg style="left:564.0px;top:97.9px" width="11" height="10" viewBox="0 0 11 10"><path d="M1.4 9.4V1H4.4C6.4 1 6.4 4.6 4.4 4.6H1.4" fill="none" stroke="#2b4a8f" stroke-width="1.2"/><circle cx="7.8" cy="7" r="2.4" fill="#35b035"/><path d="M6.4 7H9.2M7.8 5.6V8.4" stroke="#fff" stroke-width=".7"/></svg>
<svg style="left:585.3px;top:97.9px" width="11" height="11" viewBox="0 0 11 11"><rect x=".8" y=".8" width="7.8" height="7.8" fill="#dfe6f5" stroke="#2b4a8f" stroke-width=".9"/><rect x="3" y="3" width="3.4" height="3.4" fill="#2b4a8f"/><path d="M8.4 10.6L10.6 10.6L10.6 8.4Z" fill="#555"/></svg>
<svg style="left:605.8px;top:97.9px" width="11" height="11" viewBox="0 0 11 11"><rect x=".8" y="2.6" width="5" height="4.4" fill="none" stroke="#2b4a8f" stroke-width=".9"/><circle cx="7.6" cy="1.6" r="1.1" fill="#35b035"/><circle cx="8.2" cy="7.8" r="1.1" fill="#35b035"/><circle cx="7" cy="4.8" r=".7" fill="#35b035"/><path d="M8.4 10.6L10.6 10.6L10.6 8.4Z" fill="#555"/></svg>
<svg style="left:736.7px;top:97.9px" width="10" height="10" viewBox="0 0 10 10"><g transform="translate(5 5) scale(1.0)"><g fill="#2b4a8f"><rect x="-.9" y="-4.2" width="1.8" height="8.4" transform="rotate(0)"/><rect x="-.9" y="-4.2" width="1.8" height="8.4" transform="rotate(45)"/><rect x="-.9" y="-4.2" width="1.8" height="8.4" transform="rotate(90)"/><rect x="-.9" y="-4.2" width="1.8" height="8.4" transform="rotate(135)"/><circle r="2.9"/></g><circle r="1.5" fill="#fff"/></g></svg>
<svg style="left:392.6px;top:113.3px;overflow:hidden" width="351.2" height="218.7" viewBox="0 0 351.2 218.7"><rect width="351.2" height="218.7" fill="#000"/><path d="M5.0 0V218.7" stroke="#9a6a28" stroke-width=".5"/><path d="M5.0 4.0h1.3M5.0 12.2h1.3M5.0 20.5h1.3M5.0 28.8h1.3M5.0 37.0h1.3M5.0 45.2h1.3M5.0 53.5h1.3M5.0 61.8h1.3M5.0 70.0h1.3M5.0 78.2h1.3M5.0 86.5h1.3M5.0 94.8h1.3M5.0 103.0h1.3M5.0 111.2h1.3M5.0 119.5h1.3M5.0 127.8h1.3M5.0 136.0h1.3M5.0 144.2h1.3M5.0 152.5h1.3M5.0 160.8h1.3M5.0 169.0h1.3M5.0 177.2h1.3M5.0 185.5h1.3M5.0 193.8h1.3M5.0 202.0h1.3M5.0 210.2h1.3M5.0 218.5h1.3" stroke="#9a9a9a" stroke-width=".4"/><path d="M22.1 0V218.7M163.8 0V218.7M305.5 0V218.7M22.1 35.6H351.2M22.1 101.5H351.2M22.1 167.4H351.2" stroke="#0b0b68" stroke-width=".55" fill="none"/><g transform="translate(26.7 -27.7)"><rect x="0" y="0" width="63.5" height="60.8" fill="none" stroke="#3a3a3a" stroke-width=".5"/><path d="M5.8 2.9h5.6q1 0 1 1v8.6q0 1 -1 1h-5.6q-1 0 -1 -1v-8.6q0 -1 1 -1zM6.2 5.1h4.8v6.2h-4.8zM4.8 5.1h7.6M4.8 11.3h7.6M5.8 15.5h5.6q1 0 1 1v8.6q0 1 -1 1h-5.6q-1 0 -1 -1v-8.6q0 -1 1 -1zM6.2 17.7h4.8v6.2h-4.8zM4.8 17.7h7.6M4.8 23.9h7.6M5.8 28.1h5.6q1 0 1 1v8.6q0 1 -1 1h-5.6q-1 0 -1 -1v-8.6q0 -1 1 -1zM6.2 30.3h4.8v6.2h-4.8zM4.8 30.3h7.6M4.8 36.5h7.6M5.8 40.6h5.6q1 0 1 1v8.6q0 1 -1 1h-5.6q-1 0 -1 -1v-8.6q0 -1 1 -1zM6.2 42.8h4.8v6.2h-4.8zM4.8 42.8h7.6M4.8 49.0h7.6M18 10.5h1.4q4.3 1.2 4.5 3.7q-.2 2.5 -4.5 3.7h-1.4zM18 22.9h1.4q4.3 1.2 4.5 3.7q-.2 2.5 -4.5 3.7h-1.4zM18 35.7h1.4q4.3 1.2 4.5 3.7q-.2 2.5 -4.5 3.7h-1.4zM29.2 2.9h17v49.2h-17zM53 1.6h5.6v4.8h-5.6zM53 8.0h5.6v4.8h-5.6zM53 14.4h5.6v4.8h-5.6zM53 20.8h5.6v4.8h-5.6zM53 29.2h5.6v4.8h-5.6zM53 35.6h5.6v4.8h-5.6zM53 42.0h5.6v4.8h-5.6zM53 48.5h5.6v4.8h-5.6z" fill="none" stroke="#a8a8a8" stroke-width=".45"/><path d="M32.6 4.6l3.6 1.8l-3.6 1.8zM38.2 9.4l3.6 1.8l-3.6 1.8zM36.2 6.4h1.2M41.8 11.2h1.2M30.4 5.6h1.6M30.4 8.0h1.6M30.4 11.0h1.6M30.4 13.6h1.6M43.6 5.8h1.8M43.6 7.6h1.8M43.6 13.0h1.8M33.4 13.2h1.6v1.4h-1.6zM39.6 5.8a1 1 0 1 0 .1 0M35 10.2v2.4h2M32.6 16.6l3.6 1.8l-3.6 1.8zM38.2 21.4l3.6 1.8l-3.6 1.8zM36.2 18.4h1.2M41.8 23.2h1.2M30.4 17.6h1.6M30.4 20.0h1.6M30.4 23.0h1.6M30.4 25.6h1.6M43.6 17.8h1.8M43.6 19.6h1.8M43.6 25.0h1.8M33.4 25.2h1.6v1.4h-1.6zM39.6 17.8a1 1 0 1 0 .1 0M35 22.2v2.4h2M32.6 28.6l3.6 1.8l-3.6 1.8zM38.2 33.4l3.6 1.8l-3.6 1.8zM36.2 30.4h1.2M41.8 35.2h1.2M30.4 29.6h1.6M30.4 32.0h1.6M30.4 35.0h1.6M30.4 37.6h1.6M43.6 29.8h1.8M43.6 31.6h1.8M43.6 37.0h1.8M33.4 37.2h1.6v1.4h-1.6zM39.6 29.8a1 1 0 1 0 .1 0M35 34.2v2.4h2M32.6 40.6l3.6 1.8l-3.6 1.8zM38.2 45.4l3.6 1.8l-3.6 1.8zM36.2 42.4h1.2M41.8 47.2h1.2M30.4 41.6h1.6M30.4 44.0h1.6M30.4 47.0h1.6M30.4 49.6h1.6M43.6 41.8h1.8M43.6 43.6h1.8M43.6 49.0h1.8M33.4 49.2h1.6v1.4h-1.6zM39.6 41.8a1 1 0 1 0 .1 0M35 46.2v2.4h2" fill="none" stroke="#c4c4c4" stroke-width=".5"/></g><g transform="translate(95.4 -27.7)"><rect x="0" y="0" width="63.5" height="60.8" fill="none" stroke="#3a3a3a" stroke-width=".5"/><path d="M5.8 2.9h5.6q1 0 1 1v8.6q0 1 -1 1h-5.6q-1 0 -1 -1v-8.6q0 -1 1 -1zM6.2 5.1h4.8v6.2h-4.8zM4.8 5.1h7.6M4.8 11.3h7.6M5.8 15.5h5.6q1 0 1 1v8.6q0 1 -1 1h-5.6q-1 0 -1 -1v-8.6q0 -1 1 -1zM6.2 17.7h4.8v6.2h-4.8zM4.8 17.7h7.6M4.8 23.9h7.6M5.8 28.1h5.6q1 0 1 1v8.6q0 1 -1 1h-5.6q-1 0 -1 -1v-8.6q0 -1 1 -1zM6.2 30.3h4.8v6.2h-4.8zM4.8 30.3h7.6M4.8 36.5h7.6M5.8 40.6h5.6q1 0 1 1v8.6q0 1 -1 1h-5.6q-1 0 -1 -1v-8.6q0 -1 1 -1zM6.2 42.8h4.8v6.2h-4.8zM4.8 42.8h7.6M4.8 49.0h7.6M18 10.5h1.4q4.3 1.2 4.5 3.7q-.2 2.5 -4.5 3.7h-1.4zM18 22.9h1.4q4.3 1.2 4.5 3.7q-.2 2.5 -4.5 3.7h-1.4zM18 35.7h1.4q4.3 1.2 4.5 3.7q-.2 2.5 -4.5 3.7h-1.4zM29.2 2.9h17v49.2h-17zM53 1.6h5.6v4.8h-5.6zM53 8.0h5.6v4.8h-5.6zM53 14.4h5.6v4.8h-5.6zM53 20.8h5.6v4.8h-5.6zM53 29.2h5.6v4.8h-5.6zM53 35.6h5.6v4.8h-5.6zM53 42.0h5.6v4.8h-5.6zM53 48.5h5.6v4.8h-5.6z" fill="none" stroke="#a8a8a8" stroke-width=".45"/><path d="M32.6 4.6l3.6 1.8l-3.6 1.8zM38.2 9.4l3.6 1.8l-3.6 1.8zM36.2 6.4h1.2M41.8 11.2h1.2M30.4 5.6h1.6M30.4 8.0h1.6M30.4 11.0h1.6M30.4 13.6h1.6M43.6 5.8h1.8M43.6 7.6h1.8M43.6 13.0h1.8M33.4 13.2h1.6v1.4h-1.6zM39.6 5.8a1 1 0 1 0 .1 0M35 10.2v2.4h2M32.6 16.6l3.6 1.8l-3.6 1.8zM38.2 21.4l3.6 1.8l-3.6 1.8zM36.2 18.4h1.2M41.8 23.2h1.2M30.4 17.6h1.6M30.4 20.0h1.6M30.4 23.0h1.6M30.4 25.6h1.6M43.6 17.8h1.8M43.6 19.6h1.8M43.6 25.0h1.8M33.4 25.2h1.6v1.4h-1.6zM39.6 17.8a1 1 0 1 0 .1 0M35 22.2v2.4h2M32.6 28.6l3.6 1.8l-3.6 1.8zM38.2 33.4l3.6 1.8l-3.6 1.8zM36.2 30.4h1.2M41.8 35.2h1.2M30.4 29.6h1.6M30.4 32.0h1.6M30.4 35.0h1.6M30.4 37.6h1.6M43.6 29.8h1.8M43.6 31.6h1.8M43.6 37.0h1.8M33.4 37.2h1.6v1.4h-1.6zM39.6 29.8a1 1 0 1 0 .1 0M35 34.2v2.4h2M32.6 40.6l3.6 1.8l-3.6 1.8zM38.2 45.4l3.6 1.8l-3.6 1.8zM36.2 42.4h1.2M41.8 47.2h1.2M30.4 41.6h1.6M30.4 44.0h1.6M30.4 47.0h1.6M30.4 49.6h1.6M43.6 41.8h1.8M43.6 43.6h1.8M43.6 49.0h1.8M33.4 49.2h1.6v1.4h-1.6zM39.6 41.8a1 1 0 1 0 .1 0M35 46.2v2.4h2" fill="none" stroke="#c4c4c4" stroke-width=".5"/></g><g transform="translate(168.4 -27.7)"><rect x="0" y="0" width="63.5" height="60.8" fill="none" stroke="#3a3a3a" stroke-width=".5"/><path d="M5.8 2.9h5.6q1 0 1 1v8.6q0 1 -1 1h-5.6q-1 0 -1 -1v-8.6q0 -1 1 -1zM6.2 5.1h4.8v6.2h-4.8zM4.8 5.1h7.6M4.8 11.3h7.6M5.8 15.5h5.6q1 0 1 1v8.6q0 1 -1 1h-5.6q-1 0 -1 -1v-8.6q0 -1 1 -1zM6.2 17.7h4.8v6.2h-4.8zM4.8 17.7h7.6M4.8 23.9h7.6M5.8 28.1h5.6q1 0 1 1v8.6q0 1 -1 1h-5.6q-1 0 -1 -1v-8.6q0 -1 1 -1zM6.2 30.3h4.8v6.2h-4.8zM4.8 30.3h7.6M4.8 36.5h7.6M5.8 40.6h5.6q1 0 1 1v8.6q0 1 -1 1h-5.6q-1 0 -1 -1v-8.6q0 -1 1 -1zM6.2 42.8h4.8v6.2h-4.8zM4.8 42.8h7.6M4.8 49.0h7.6M18 10.5h1.4q4.3 1.2 4.5 3.7q-.2 2.5 -4.5 3.7h-1.4zM18 22.9h1.4q4.3 1.2 4.5 3.7q-.2 2.5 -4.5 3.7h-1.4zM18 35.7h1.4q4.3 1.2 4.5 3.7q-.2 2.5 -4.5 3.7h-1.4zM29.2 2.9h17v49.2h-17zM53 1.6h5.6v4.8h-5.6zM53 8.0h5.6v4.8h-5.6zM53 14.4h5.6v4.8h-5.6zM53 20.8h5.6v4.8h-5.6zM53 29.2h5.6v4.8h-5.6zM53 35.6h5.6v4.8h-5.6zM53 42.0h5.6v4.8h-5.6zM53 48.5h5.6v4.8h-5.6z" fill="none" stroke="#a8a8a8" stroke-width=".45"/><path d="M32.6 4.6l3.6 1.8l-3.6 1.8zM38.2 9.4l3.6 1.8l-3.6 1.8zM36.2 6.4h1.2M41.8 11.2h1.2M30.4 5.6h1.6M30.4 8.0h1.6M30.4 11.0h1.6M30.4 13.6h1.6M43.6 5.8h1.8M43.6 7.6h1.8M43.6 13.0h1.8M33.4 13.2h1.6v1.4h-1.6zM39.6 5.8a1 1 0 1 0 .1 0M35 10.2v2.4h2M32.6 16.6l3.6 1.8l-3.6 1.8zM38.2 21.4l3.6 1.8l-3.6 1.8zM36.2 18.4h1.2M41.8 23.2h1.2M30.4 17.6h1.6M30.4 20.0h1.6M30.4 23.0h1.6M30.4 25.6h1.6M43.6 17.8h1.8M43.6 19.6h1.8M43.6 25.0h1.8M33.4 25.2h1.6v1.4h-1.6zM39.6 17.8a1 1 0 1 0 .1 0M35 22.2v2.4h2M32.6 28.6l3.6 1.8l-3.6 1.8zM38.2 33.4l3.6 1.8l-3.6 1.8zM36.2 30.4h1.2M41.8 35.2h1.2M30.4 29.6h1.6M30.4 32.0h1.6M30.4 35.0h1.6M30.4 37.6h1.6M43.6 29.8h1.8M43.6 31.6h1.8M43.6 37.0h1.8M33.4 37.2h1.6v1.4h-1.6zM39.6 29.8a1 1 0 1 0 .1 0M35 34.2v2.4h2M32.6 40.6l3.6 1.8l-3.6 1.8zM38.2 45.4l3.6 1.8l-3.6 1.8zM36.2 42.4h1.2M41.8 47.2h1.2M30.4 41.6h1.6M30.4 44.0h1.6M30.4 47.0h1.6M30.4 49.6h1.6M43.6 41.8h1.8M43.6 43.6h1.8M43.6 49.0h1.8M33.4 49.2h1.6v1.4h-1.6zM39.6 41.8a1 1 0 1 0 .1 0M35 46.2v2.4h2" fill="none" stroke="#c4c4c4" stroke-width=".5"/></g><g transform="translate(237.0 -27.7)"><rect x="0" y="0" width="63.5" height="60.8" fill="none" stroke="#3a3a3a" stroke-width=".5"/><path d="M5.8 2.9h5.6q1 0 1 1v8.6q0 1 -1 1h-5.6q-1 0 -1 -1v-8.6q0 -1 1 -1zM6.2 5.1h4.8v6.2h-4.8zM4.8 5.1h7.6M4.8 11.3h7.6M5.8 15.5h5.6q1 0 1 1v8.6q0 1 -1 1h-5.6q-1 0 -1 -1v-8.6q0 -1 1 -1zM6.2 17.7h4.8v6.2h-4.8zM4.8 17.7h7.6M4.8 23.9h7.6M5.8 28.1h5.6q1 0 1 1v8.6q0 1 -1 1h-5.6q-1 0 -1 -1v-8.6q0 -1 1 -1zM6.2 30.3h4.8v6.2h-4.8zM4.8 30.3h7.6M4.8 36.5h7.6M5.8 40.6h5.6q1 0 1 1v8.6q0 1 -1 1h-5.6q-1 0 -1 -1v-8.6q0 -1 1 -1zM6.2 42.8h4.8v6.2h-4.8zM4.8 42.8h7.6M4.8 49.0h7.6M18 10.5h1.4q4.3 1.2 4.5 3.7q-.2 2.5 -4.5 3.7h-1.4zM18 22.9h1.4q4.3 1.2 4.5 3.7q-.2 2.5 -4.5 3.7h-1.4zM18 35.7h1.4q4.3 1.2 4.5 3.7q-.2 2.5 -4.5 3.7h-1.4zM29.2 2.9h17v49.2h-17zM53 1.6h5.6v4.8h-5.6zM53 8.0h5.6v4.8h-5.6zM53 14.4h5.6v4.8h-5.6zM53 20.8h5.6v4.8h-5.6zM53 29.2h5.6v4.8h-5.6zM53 35.6h5.6v4.8h-5.6zM53 42.0h5.6v4.8h-5.6zM53 48.5h5.6v4.8h-5.6z" fill="none" stroke="#a8a8a8" stroke-width=".45"/><path d="M32.6 4.6l3.6 1.8l-3.6 1.8zM38.2 9.4l3.6 1.8l-3.6 1.8zM36.2 6.4h1.2M41.8 11.2h1.2M30.4 5.6h1.6M30.4 8.0h1.6M30.4 11.0h1.6M30.4 13.6h1.6M43.6 5.8h1.8M43.6 7.6h1.8M43.6 13.0h1.8M33.4 13.2h1.6v1.4h-1.6zM39.6 5.8a1 1 0 1 0 .1 0M35 10.2v2.4h2M32.6 16.6l3.6 1.8l-3.6 1.8zM38.2 21.4l3.6 1.8l-3.6 1.8zM36.2 18.4h1.2M41.8 23.2h1.2M30.4 17.6h1.6M30.4 20.0h1.6M30.4 23.0h1.6M30.4 25.6h1.6M43.6 17.8h1.8M43.6 19.6h1.8M43.6 25.0h1.8M33.4 25.2h1.6v1.4h-1.6zM39.6 17.8a1 1 0 1 0 .1 0M35 22.2v2.4h2M32.6 28.6l3.6 1.8l-3.6 1.8zM38.2 33.4l3.6 1.8l-3.6 1.8zM36.2 30.4h1.2M41.8 35.2h1.2M30.4 29.6h1.6M30.4 32.0h1.6M30.4 35.0h1.6M30.4 37.6h1.6M43.6 29.8h1.8M43.6 31.6h1.8M43.6 37.0h1.8M33.4 37.2h1.6v1.4h-1.6zM39.6 29.8a1 1 0 1 0 .1 0M35 34.2v2.4h2M32.6 40.6l3.6 1.8l-3.6 1.8zM38.2 45.4l3.6 1.8l-3.6 1.8zM36.2 42.4h1.2M41.8 47.2h1.2M30.4 41.6h1.6M30.4 44.0h1.6M30.4 47.0h1.6M30.4 49.6h1.6M43.6 41.8h1.8M43.6 43.6h1.8M43.6 49.0h1.8M33.4 49.2h1.6v1.4h-1.6zM39.6 41.8a1 1 0 1 0 .1 0M35 46.2v2.4h2" fill="none" stroke="#c4c4c4" stroke-width=".5"/></g><g transform="translate(310.1 -27.7)"><rect x="0" y="0" width="63.5" height="60.8" fill="none" stroke="#3a3a3a" stroke-width=".5"/><path d="M5.8 2.9h5.6q1 0 1 1v8.6q0 1 -1 1h-5.6q-1 0 -1 -1v-8.6q0 -1 1 -1zM6.2 5.1h4.8v6.2h-4.8zM4.8 5.1h7.6M4.8 11.3h7.6M5.8 15.5h5.6q1 0 1 1v8.6q0 1 -1 1h-5.6q-1 0 -1 -1v-8.6q0 -1 1 -1zM6.2 17.7h4.8v6.2h-4.8zM4.8 17.7h7.6M4.8 23.9h7.6M5.8 28.1h5.6q1 0 1 1v8.6q0 1 -1 1h-5.6q-1 0 -1 -1v-8.6q0 -1 1 -1zM6.2 30.3h4.8v6.2h-4.8zM4.8 30.3h7.6M4.8 36.5h7.6M5.8 40.6h5.6q1 0 1 1v8.6q0 1 -1 1h-5.6q-1 0 -1 -1v-8.6q0 -1 1 -1zM6.2 42.8h4.8v6.2h-4.8zM4.8 42.8h7.6M4.8 49.0h7.6M18 10.5h1.4q4.3 1.2 4.5 3.7q-.2 2.5 -4.5 3.7h-1.4zM18 22.9h1.4q4.3 1.2 4.5 3.7q-.2 2.5 -4.5 3.7h-1.4zM18 35.7h1.4q4.3 1.2 4.5 3.7q-.2 2.5 -4.5 3.7h-1.4zM29.2 2.9h17v49.2h-17zM53 1.6h5.6v4.8h-5.6zM53 8.0h5.6v4.8h-5.6zM53 14.4h5.6v4.8h-5.6zM53 20.8h5.6v4.8h-5.6zM53 29.2h5.6v4.8h-5.6zM53 35.6h5.6v4.8h-5.6zM53 42.0h5.6v4.8h-5.6zM53 48.5h5.6v4.8h-5.6z" fill="none" stroke="#a8a8a8" stroke-width=".45"/><path d="M32.6 4.6l3.6 1.8l-3.6 1.8zM38.2 9.4l3.6 1.8l-3.6 1.8zM36.2 6.4h1.2M41.8 11.2h1.2M30.4 5.6h1.6M30.4 8.0h1.6M30.4 11.0h1.6M30.4 13.6h1.6M43.6 5.8h1.8M43.6 7.6h1.8M43.6 13.0h1.8M33.4 13.2h1.6v1.4h-1.6zM39.6 5.8a1 1 0 1 0 .1 0M35 10.2v2.4h2M32.6 16.6l3.6 1.8l-3.6 1.8zM38.2 21.4l3.6 1.8l-3.6 1.8zM36.2 18.4h1.2M41.8 23.2h1.2M30.4 17.6h1.6M30.4 20.0h1.6M30.4 23.0h1.6M30.4 25.6h1.6M43.6 17.8h1.8M43.6 19.6h1.8M43.6 25.0h1.8M33.4 25.2h1.6v1.4h-1.6zM39.6 17.8a1 1 0 1 0 .1 0M35 22.2v2.4h2M32.6 28.6l3.6 1.8l-3.6 1.8zM38.2 33.4l3.6 1.8l-3.6 1.8zM36.2 30.4h1.2M41.8 35.2h1.2M30.4 29.6h1.6M30.4 32.0h1.6M30.4 35.0h1.6M30.4 37.6h1.6M43.6 29.8h1.8M43.6 31.6h1.8M43.6 37.0h1.8M33.4 37.2h1.6v1.4h-1.6zM39.6 29.8a1 1 0 1 0 .1 0M35 34.2v2.4h2M32.6 40.6l3.6 1.8l-3.6 1.8zM38.2 45.4l3.6 1.8l-3.6 1.8zM36.2 42.4h1.2M41.8 47.2h1.2M30.4 41.6h1.6M30.4 44.0h1.6M30.4 47.0h1.6M30.4 49.6h1.6M43.6 41.8h1.8M43.6 43.6h1.8M43.6 49.0h1.8M33.4 49.2h1.6v1.4h-1.6zM39.6 41.8a1 1 0 1 0 .1 0M35 46.2v2.4h2" fill="none" stroke="#c4c4c4" stroke-width=".5"/></g><g transform="translate(378.7 -27.7)"><rect x="0" y="0" width="63.5" height="60.8" fill="none" stroke="#3a3a3a" stroke-width=".5"/><path d="M5.8 2.9h5.6q1 0 1 1v8.6q0 1 -1 1h-5.6q-1 0 -1 -1v-8.6q0 -1 1 -1zM6.2 5.1h4.8v6.2h-4.8zM4.8 5.1h7.6M4.8 11.3h7.6M5.8 15.5h5.6q1 0 1 1v8.6q0 1 -1 1h-5.6q-1 0 -1 -1v-8.6q0 -1 1 -1zM6.2 17.7h4.8v6.2h-4.8zM4.8 17.7h7.6M4.8 23.9h7.6M5.8 28.1h5.6q1 0 1 1v8.6q0 1 -1 1h-5.6q-1 0 -1 -1v-8.6q0 -1 1 -1zM6.2 30.3h4.8v6.2h-4.8zM4.8 30.3h7.6M4.8 36.5h7.6M5.8 40.6h5.6q1 0 1 1v8.6q0 1 -1 1h-5.6q-1 0 -1 -1v-8.6q0 -1 1 -1zM6.2 42.8h4.8v6.2h-4.8zM4.8 42.8h7.6M4.8 49.0h7.6M18 10.5h1.4q4.3 1.2 4.5 3.7q-.2 2.5 -4.5 3.7h-1.4zM18 22.9h1.4q4.3 1.2 4.5 3.7q-.2 2.5 -4.5 3.7h-1.4zM18 35.7h1.4q4.3 1.2 4.5 3.7q-.2 2.5 -4.5 3.7h-1.4zM29.2 2.9h17v49.2h-17zM53 1.6h5.6v4.8h-5.6zM53 8.0h5.6v4.8h-5.6zM53 14.4h5.6v4.8h-5.6zM53 20.8h5.6v4.8h-5.6zM53 29.2h5.6v4.8h-5.6zM53 35.6h5.6v4.8h-5.6zM53 42.0h5.6v4.8h-5.6zM53 48.5h5.6v4.8h-5.6z" fill="none" stroke="#a8a8a8" stroke-width=".45"/><path d="M32.6 4.6l3.6 1.8l-3.6 1.8zM38.2 9.4l3.6 1.8l-3.6 1.8zM36.2 6.4h1.2M41.8 11.2h1.2M30.4 5.6h1.6M30.4 8.0h1.6M30.4 11.0h1.6M30.4 13.6h1.6M43.6 5.8h1.8M43.6 7.6h1.8M43.6 13.0h1.8M33.4 13.2h1.6v1.4h-1.6zM39.6 5.8a1 1 0 1 0 .1 0M35 10.2v2.4h2M32.6 16.6l3.6 1.8l-3.6 1.8zM38.2 21.4l3.6 1.8l-3.6 1.8zM36.2 18.4h1.2M41.8 23.2h1.2M30.4 17.6h1.6M30.4 20.0h1.6M30.4 23.0h1.6M30.4 25.6h1.6M43.6 17.8h1.8M43.6 19.6h1.8M43.6 25.0h1.8M33.4 25.2h1.6v1.4h-1.6zM39.6 17.8a1 1 0 1 0 .1 0M35 22.2v2.4h2M32.6 28.6l3.6 1.8l-3.6 1.8zM38.2 33.4l3.6 1.8l-3.6 1.8zM36.2 30.4h1.2M41.8 35.2h1.2M30.4 29.6h1.6M30.4 32.0h1.6M30.4 35.0h1.6M30.4 37.6h1.6M43.6 29.8h1.8M43.6 31.6h1.8M43.6 37.0h1.8M33.4 37.2h1.6v1.4h-1.6zM39.6 29.8a1 1 0 1 0 .1 0M35 34.2v2.4h2M32.6 40.6l3.6 1.8l-3.6 1.8zM38.2 45.4l3.6 1.8l-3.6 1.8zM36.2 42.4h1.2M41.8 47.2h1.2M30.4 41.6h1.6M30.4 44.0h1.6M30.4 47.0h1.6M30.4 49.6h1.6M43.6 41.8h1.8M43.6 43.6h1.8M43.6 49.0h1.8M33.4 49.2h1.6v1.4h-1.6zM39.6 41.8a1 1 0 1 0 .1 0M35 46.2v2.4h2" fill="none" stroke="#c4c4c4" stroke-width=".5"/></g><g transform="translate(26.7 38.1)"><rect x="0" y="0" width="63.5" height="60.8" fill="none" stroke="#3a3a3a" stroke-width=".5"/><path d="M5.8 2.9h5.6q1 0 1 1v8.6q0 1 -1 1h-5.6q-1 0 -1 -1v-8.6q0 -1 1 -1zM6.2 5.1h4.8v6.2h-4.8zM4.8 5.1h7.6M4.8 11.3h7.6M5.8 15.5h5.6q1 0 1 1v8.6q0 1 -1 1h-5.6q-1 0 -1 -1v-8.6q0 -1 1 -1zM6.2 17.7h4.8v6.2h-4.8zM4.8 17.7h7.6M4.8 23.9h7.6M5.8 28.1h5.6q1 0 1 1v8.6q0 1 -1 1h-5.6q-1 0 -1 -1v-8.6q0 -1 1 -1zM6.2 30.3h4.8v6.2h-4.8zM4.8 30.3h7.6M4.8 36.5h7.6M18 10.5h1.4q4.3 1.2 4.5 3.7q-.2 2.5 -4.5 3.7h-1.4zM18 22.9h1.4q4.3 1.2 4.5 3.7q-.2 2.5 -4.5 3.7h-1.4zM18 35.7h1.4q4.3 1.2 4.5 3.7q-.2 2.5 -4.5 3.7h-1.4zM29.2 2.9h17v49.2h-17zM53 1.6h5.6v4.8h-5.6zM53 8.0h5.6v4.8h-5.6zM53 14.4h5.6v4.8h-5.6zM53 20.8h5.6v4.8h-5.6zM53 29.2h5.6v4.8h-5.6zM53 35.6h5.6v4.8h-5.6zM53 42.0h5.6v4.8h-5.6zM53 48.5h5.6v4.8h-5.6z" fill="none" stroke="#a8a8a8" stroke-width=".45"/><path d="M32.6 4.6l3.6 1.8l-3.6 1.8zM38.2 9.4l3.6 1.8l-3.6 1.8zM36.2 6.4h1.2M41.8 11.2h1.2M30.4 5.6h1.6M30.4 8.0h1.6M30.4 11.0h1.6M30.4 13.6h1.6M43.6 5.8h1.8M43.6 7.6h1.8M43.6 13.0h1.8M33.4 13.2h1.6v1.4h-1.6zM39.6 5.8a1 1 0 1 0 .1 0M35 10.2v2.4h2M32.6 16.6l3.6 1.8l-3.6 1.8zM38.2 21.4l3.6 1.8l-3.6 1.8zM36.2 18.4h1.2M41.8 23.2h1.2M30.4 17.6h1.6M30.4 20.0h1.6M30.4 23.0h1.6M30.4 25.6h1.6M43.6 17.8h1.8M43.6 19.6h1.8M43.6 25.0h1.8M33.4 25.2h1.6v1.4h-1.6zM39.6 17.8a1 1 0 1 0 .1 0M35 22.2v2.4h2M32.6 28.6l3.6 1.8l-3.6 1.8zM38.2 33.4l3.6 1.8l-3.6 1.8zM36.2 30.4h1.2M41.8 35.2h1.2M30.4 29.6h1.6M30.4 32.0h1.6M30.4 35.0h1.6M30.4 37.6h1.6M43.6 29.8h1.8M43.6 31.6h1.8M43.6 37.0h1.8M33.4 37.2h1.6v1.4h-1.6zM39.6 29.8a1 1 0 1 0 .1 0M35 34.2v2.4h2M32.6 40.6l3.6 1.8l-3.6 1.8zM38.2 45.4l3.6 1.8l-3.6 1.8zM36.2 42.4h1.2M41.8 47.2h1.2M30.4 41.6h1.6M30.4 44.0h1.6M30.4 47.0h1.6M30.4 49.6h1.6M43.6 41.8h1.8M43.6 43.6h1.8M43.6 49.0h1.8M33.4 49.2h1.6v1.4h-1.6zM39.6 41.8a1 1 0 1 0 .1 0M35 46.2v2.4h2" fill="none" stroke="#c4c4c4" stroke-width=".5"/><rect x="4" y="40.5" width="9.4" height="13" fill="#fff"/><rect x="6" y="42.7" width="5.4" height="8.6" fill="#6f8f93"/></g><g transform="translate(95.4 38.1)"><rect x="0" y="0" width="63.5" height="60.8" fill="none" stroke="#3a3a3a" stroke-width=".5"/><path d="M5.8 2.9h5.6q1 0 1 1v8.6q0 1 -1 1h-5.6q-1 0 -1 -1v-8.6q0 -1 1 -1zM6.2 5.1h4.8v6.2h-4.8zM4.8 5.1h7.6M4.8 11.3h7.6M5.8 15.5h5.6q1 0 1 1v8.6q0 1 -1 1h-5.6q-1 0 -1 -1v-8.6q0 -1 1 -1zM6.2 17.7h4.8v6.2h-4.8zM4.8 17.7h7.6M4.8 23.9h7.6M5.8 28.1h5.6q1 0 1 1v8.6q0 1 -1 1h-5.6q-1 0 -1 -1v-8.6q0 -1 1 -1zM6.2 30.3h4.8v6.2h-4.8zM4.8 30.3h7.6M4.8 36.5h7.6M18 10.5h1.4q4.3 1.2 4.5 3.7q-.2 2.5 -4.5 3.7h-1.4zM18 22.9h1.4q4.3 1.2 4.5 3.7q-.2 2.5 -4.5 3.7h-1.4zM18 35.7h1.4q4.3 1.2 4.5 3.7q-.2 2.5 -4.5 3.7h-1.4zM29.2 2.9h17v49.2h-17zM53 1.6h5.6v4.8h-5.6zM53 8.0h5.6v4.8h-5.6zM53 14.4h5.6v4.8h-5.6zM53 20.8h5.6v4.8h-5.6zM53 29.2h5.6v4.8h-5.6zM53 35.6h5.6v4.8h-5.6zM53 42.0h5.6v4.8h-5.6zM53 48.5h5.6v4.8h-5.6z" fill="none" stroke="#a8a8a8" stroke-width=".45"/><path d="M32.6 4.6l3.6 1.8l-3.6 1.8zM38.2 9.4l3.6 1.8l-3.6 1.8zM36.2 6.4h1.2M41.8 11.2h1.2M30.4 5.6h1.6M30.4 8.0h1.6M30.4 11.0h1.6M30.4 13.6h1.6M43.6 5.8h1.8M43.6 7.6h1.8M43.6 13.0h1.8M33.4 13.2h1.6v1.4h-1.6zM39.6 5.8a1 1 0 1 0 .1 0M35 10.2v2.4h2M32.6 16.6l3.6 1.8l-3.6 1.8zM38.2 21.4l3.6 1.8l-3.6 1.8zM36.2 18.4h1.2M41.8 23.2h1.2M30.4 17.6h1.6M30.4 20.0h1.6M30.4 23.0h1.6M30.4 25.6h1.6M43.6 17.8h1.8M43.6 19.6h1.8M43.6 25.0h1.8M33.4 25.2h1.6v1.4h-1.6zM39.6 17.8a1 1 0 1 0 .1 0M35 22.2v2.4h2M32.6 28.6l3.6 1.8l-3.6 1.8zM38.2 33.4l3.6 1.8l-3.6 1.8zM36.2 30.4h1.2M41.8 35.2h1.2M30.4 29.6h1.6M30.4 32.0h1.6M30.4 35.0h1.6M30.4 37.6h1.6M43.6 29.8h1.8M43.6 31.6h1.8M43.6 37.0h1.8M33.4 37.2h1.6v1.4h-1.6zM39.6 29.8a1 1 0 1 0 .1 0M35 34.2v2.4h2M32.6 40.6l3.6 1.8l-3.6 1.8zM38.2 45.4l3.6 1.8l-3.6 1.8zM36.2 42.4h1.2M41.8 47.2h1.2M30.4 41.6h1.6M30.4 44.0h1.6M30.4 47.0h1.6M30.4 49.6h1.6M43.6 41.8h1.8M43.6 43.6h1.8M43.6 49.0h1.8M33.4 49.2h1.6v1.4h-1.6zM39.6 41.8a1 1 0 1 0 .1 0M35 46.2v2.4h2" fill="none" stroke="#c4c4c4" stroke-width=".5"/><rect x="4" y="40.5" width="9.4" height="13" fill="#fff"/><rect x="6" y="42.7" width="5.4" height="8.6" fill="#6f8f93"/></g><g transform="translate(168.4 38.1)"><rect x="0" y="0" width="63.5" height="60.8" fill="none" stroke="#3a3a3a" stroke-width=".5"/><path d="M5.8 2.9h5.6q1 0 1 1v8.6q0 1 -1 1h-5.6q-1 0 -1 -1v-8.6q0 -1 1 -1zM6.2 5.1h4.8v6.2h-4.8zM4.8 5.1h7.6M4.8 11.3h7.6M5.8 15.5h5.6q1 0 1 1v8.6q0 1 -1 1h-5.6q-1 0 -1 -1v-8.6q0 -1 1 -1zM6.2 17.7h4.8v6.2h-4.8zM4.8 17.7h7.6M4.8 23.9h7.6M5.8 28.1h5.6q1 0 1 1v8.6q0 1 -1 1h-5.6q-1 0 -1 -1v-8.6q0 -1 1 -1zM6.2 30.3h4.8v6.2h-4.8zM4.8 30.3h7.6M4.8 36.5h7.6M18 10.5h1.4q4.3 1.2 4.5 3.7q-.2 2.5 -4.5 3.7h-1.4zM18 22.9h1.4q4.3 1.2 4.5 3.7q-.2 2.5 -4.5 3.7h-1.4zM18 35.7h1.4q4.3 1.2 4.5 3.7q-.2 2.5 -4.5 3.7h-1.4zM29.2 2.9h17v49.2h-17zM53 1.6h5.6v4.8h-5.6zM53 8.0h5.6v4.8h-5.6zM53 14.4h5.6v4.8h-5.6zM53 20.8h5.6v4.8h-5.6zM53 29.2h5.6v4.8h-5.6zM53 35.6h5.6v4.8h-5.6zM53 42.0h5.6v4.8h-5.6zM53 48.5h5.6v4.8h-5.6z" fill="none" stroke="#a8a8a8" stroke-width=".45"/><path d="M32.6 4.6l3.6 1.8l-3.6 1.8zM38.2 9.4l3.6 1.8l-3.6 1.8zM36.2 6.4h1.2M41.8 11.2h1.2M30.4 5.6h1.6M30.4 8.0h1.6M30.4 11.0h1.6M30.4 13.6h1.6M43.6 5.8h1.8M43.6 7.6h1.8M43.6 13.0h1.8M33.4 13.2h1.6v1.4h-1.6zM39.6 5.8a1 1 0 1 0 .1 0M35 10.2v2.4h2M32.6 16.6l3.6 1.8l-3.6 1.8zM38.2 21.4l3.6 1.8l-3.6 1.8zM36.2 18.4h1.2M41.8 23.2h1.2M30.4 17.6h1.6M30.4 20.0h1.6M30.4 23.0h1.6M30.4 25.6h1.6M43.6 17.8h1.8M43.6 19.6h1.8M43.6 25.0h1.8M33.4 25.2h1.6v1.4h-1.6zM39.6 17.8a1 1 0 1 0 .1 0M35 22.2v2.4h2M32.6 28.6l3.6 1.8l-3.6 1.8zM38.2 33.4l3.6 1.8l-3.6 1.8zM36.2 30.4h1.2M41.8 35.2h1.2M30.4 29.6h1.6M30.4 32.0h1.6M30.4 35.0h1.6M30.4 37.6h1.6M43.6 29.8h1.8M43.6 31.6h1.8M43.6 37.0h1.8M33.4 37.2h1.6v1.4h-1.6zM39.6 29.8a1 1 0 1 0 .1 0M35 34.2v2.4h2M32.6 40.6l3.6 1.8l-3.6 1.8zM38.2 45.4l3.6 1.8l-3.6 1.8zM36.2 42.4h1.2M41.8 47.2h1.2M30.4 41.6h1.6M30.4 44.0h1.6M30.4 47.0h1.6M30.4 49.6h1.6M43.6 41.8h1.8M43.6 43.6h1.8M43.6 49.0h1.8M33.4 49.2h1.6v1.4h-1.6zM39.6 41.8a1 1 0 1 0 .1 0M35 46.2v2.4h2" fill="none" stroke="#c4c4c4" stroke-width=".5"/><rect x="4" y="40.5" width="9.4" height="13" fill="#fff"/><rect x="6" y="42.7" width="5.4" height="8.6" fill="#6f8f93"/></g><g transform="translate(237.0 38.1)"><rect x="0" y="0" width="63.5" height="60.8" fill="none" stroke="#3a3a3a" stroke-width=".5"/><path d="M5.8 2.9h5.6q1 0 1 1v8.6q0 1 -1 1h-5.6q-1 0 -1 -1v-8.6q0 -1 1 -1zM6.2 5.1h4.8v6.2h-4.8zM4.8 5.1h7.6M4.8 11.3h7.6M5.8 15.5h5.6q1 0 1 1v8.6q0 1 -1 1h-5.6q-1 0 -1 -1v-8.6q0 -1 1 -1zM6.2 17.7h4.8v6.2h-4.8zM4.8 17.7h7.6M4.8 23.9h7.6M5.8 28.1h5.6q1 0 1 1v8.6q0 1 -1 1h-5.6q-1 0 -1 -1v-8.6q0 -1 1 -1zM6.2 30.3h4.8v6.2h-4.8zM4.8 30.3h7.6M4.8 36.5h7.6M18 10.5h1.4q4.3 1.2 4.5 3.7q-.2 2.5 -4.5 3.7h-1.4zM18 22.9h1.4q4.3 1.2 4.5 3.7q-.2 2.5 -4.5 3.7h-1.4zM18 35.7h1.4q4.3 1.2 4.5 3.7q-.2 2.5 -4.5 3.7h-1.4zM29.2 2.9h17v49.2h-17zM53 1.6h5.6v4.8h-5.6zM53 8.0h5.6v4.8h-5.6zM53 14.4h5.6v4.8h-5.6zM53 20.8h5.6v4.8h-5.6zM53 29.2h5.6v4.8h-5.6zM53 35.6h5.6v4.8h-5.6zM53 42.0h5.6v4.8h-5.6zM53 48.5h5.6v4.8h-5.6z" fill="none" stroke="#a8a8a8" stroke-width=".45"/><path d="M32.6 4.6l3.6 1.8l-3.6 1.8zM38.2 9.4l3.6 1.8l-3.6 1.8zM36.2 6.4h1.2M41.8 11.2h1.2M30.4 5.6h1.6M30.4 8.0h1.6M30.4 11.0h1.6M30.4 13.6h1.6M43.6 5.8h1.8M43.6 7.6h1.8M43.6 13.0h1.8M33.4 13.2h1.6v1.4h-1.6zM39.6 5.8a1 1 0 1 0 .1 0M35 10.2v2.4h2M32.6 16.6l3.6 1.8l-3.6 1.8zM38.2 21.4l3.6 1.8l-3.6 1.8zM36.2 18.4h1.2M41.8 23.2h1.2M30.4 17.6h1.6M30.4 20.0h1.6M30.4 23.0h1.6M30.4 25.6h1.6M43.6 17.8h1.8M43.6 19.6h1.8M43.6 25.0h1.8M33.4 25.2h1.6v1.4h-1.6zM39.6 17.8a1 1 0 1 0 .1 0M35 22.2v2.4h2M32.6 28.6l3.6 1.8l-3.6 1.8zM38.2 33.4l3.6 1.8l-3.6 1.8zM36.2 30.4h1.2M41.8 35.2h1.2M30.4 29.6h1.6M30.4 32.0h1.6M30.4 35.0h1.6M30.4 37.6h1.6M43.6 29.8h1.8M43.6 31.6h1.8M43.6 37.0h1.8M33.4 37.2h1.6v1.4h-1.6zM39.6 29.8a1 1 0 1 0 .1 0M35 34.2v2.4h2M32.6 40.6l3.6 1.8l-3.6 1.8zM38.2 45.4l3.6 1.8l-3.6 1.8zM36.2 42.4h1.2M41.8 47.2h1.2M30.4 41.6h1.6M30.4 44.0h1.6M30.4 47.0h1.6M30.4 49.6h1.6M43.6 41.8h1.8M43.6 43.6h1.8M43.6 49.0h1.8M33.4 49.2h1.6v1.4h-1.6zM39.6 41.8a1 1 0 1 0 .1 0M35 46.2v2.4h2" fill="none" stroke="#c4c4c4" stroke-width=".5"/><rect x="4" y="40.5" width="9.4" height="13" fill="#fff"/><rect x="6" y="42.7" width="5.4" height="8.6" fill="#6f8f93"/></g><g transform="translate(310.1 38.1)"><rect x="0" y="0" width="63.5" height="60.8" fill="none" stroke="#3a3a3a" stroke-width=".5"/><path d="M5.8 2.9h5.6q1 0 1 1v8.6q0 1 -1 1h-5.6q-1 0 -1 -1v-8.6q0 -1 1 -1zM6.2 5.1h4.8v6.2h-4.8zM4.8 5.1h7.6M4.8 11.3h7.6M5.8 15.5h5.6q1 0 1 1v8.6q0 1 -1 1h-5.6q-1 0 -1 -1v-8.6q0 -1 1 -1zM6.2 17.7h4.8v6.2h-4.8zM4.8 17.7h7.6M4.8 23.9h7.6M5.8 28.1h5.6q1 0 1 1v8.6q0 1 -1 1h-5.6q-1 0 -1 -1v-8.6q0 -1 1 -1zM6.2 30.3h4.8v6.2h-4.8zM4.8 30.3h7.6M4.8 36.5h7.6M18 10.5h1.4q4.3 1.2 4.5 3.7q-.2 2.5 -4.5 3.7h-1.4zM18 22.9h1.4q4.3 1.2 4.5 3.7q-.2 2.5 -4.5 3.7h-1.4zM18 35.7h1.4q4.3 1.2 4.5 3.7q-.2 2.5 -4.5 3.7h-1.4zM29.2 2.9h17v49.2h-17zM53 1.6h5.6v4.8h-5.6zM53 8.0h5.6v4.8h-5.6zM53 14.4h5.6v4.8h-5.6zM53 20.8h5.6v4.8h-5.6zM53 29.2h5.6v4.8h-5.6zM53 35.6h5.6v4.8h-5.6zM53 42.0h5.6v4.8h-5.6zM53 48.5h5.6v4.8h-5.6z" fill="none" stroke="#a8a8a8" stroke-width=".45"/><path d="M32.6 4.6l3.6 1.8l-3.6 1.8zM38.2 9.4l3.6 1.8l-3.6 1.8zM36.2 6.4h1.2M41.8 11.2h1.2M30.4 5.6h1.6M30.4 8.0h1.6M30.4 11.0h1.6M30.4 13.6h1.6M43.6 5.8h1.8M43.6 7.6h1.8M43.6 13.0h1.8M33.4 13.2h1.6v1.4h-1.6zM39.6 5.8a1 1 0 1 0 .1 0M35 10.2v2.4h2M32.6 16.6l3.6 1.8l-3.6 1.8zM38.2 21.4l3.6 1.8l-3.6 1.8zM36.2 18.4h1.2M41.8 23.2h1.2M30.4 17.6h1.6M30.4 20.0h1.6M30.4 23.0h1.6M30.4 25.6h1.6M43.6 17.8h1.8M43.6 19.6h1.8M43.6 25.0h1.8M33.4 25.2h1.6v1.4h-1.6zM39.6 17.8a1 1 0 1 0 .1 0M35 22.2v2.4h2M32.6 28.6l3.6 1.8l-3.6 1.8zM38.2 33.4l3.6 1.8l-3.6 1.8zM36.2 30.4h1.2M41.8 35.2h1.2M30.4 29.6h1.6M30.4 32.0h1.6M30.4 35.0h1.6M30.4 37.6h1.6M43.6 29.8h1.8M43.6 31.6h1.8M43.6 37.0h1.8M33.4 37.2h1.6v1.4h-1.6zM39.6 29.8a1 1 0 1 0 .1 0M35 34.2v2.4h2M32.6 40.6l3.6 1.8l-3.6 1.8zM38.2 45.4l3.6 1.8l-3.6 1.8zM36.2 42.4h1.2M41.8 47.2h1.2M30.4 41.6h1.6M30.4 44.0h1.6M30.4 47.0h1.6M30.4 49.6h1.6M43.6 41.8h1.8M43.6 43.6h1.8M43.6 49.0h1.8M33.4 49.2h1.6v1.4h-1.6zM39.6 41.8a1 1 0 1 0 .1 0M35 46.2v2.4h2" fill="none" stroke="#c4c4c4" stroke-width=".5"/><rect x="4" y="40.5" width="9.4" height="13" fill="#fff"/><rect x="6" y="42.7" width="5.4" height="8.6" fill="#6f8f93"/></g><g transform="translate(378.7 38.1)"><rect x="0" y="0" width="63.5" height="60.8" fill="none" stroke="#3a3a3a" stroke-width=".5"/><path d="M5.8 2.9h5.6q1 0 1 1v8.6q0 1 -1 1h-5.6q-1 0 -1 -1v-8.6q0 -1 1 -1zM6.2 5.1h4.8v6.2h-4.8zM4.8 5.1h7.6M4.8 11.3h7.6M5.8 15.5h5.6q1 0 1 1v8.6q0 1 -1 1h-5.6q-1 0 -1 -1v-8.6q0 -1 1 -1zM6.2 17.7h4.8v6.2h-4.8zM4.8 17.7h7.6M4.8 23.9h7.6M5.8 28.1h5.6q1 0 1 1v8.6q0 1 -1 1h-5.6q-1 0 -1 -1v-8.6q0 -1 1 -1zM6.2 30.3h4.8v6.2h-4.8zM4.8 30.3h7.6M4.8 36.5h7.6M18 10.5h1.4q4.3 1.2 4.5 3.7q-.2 2.5 -4.5 3.7h-1.4zM18 22.9h1.4q4.3 1.2 4.5 3.7q-.2 2.5 -4.5 3.7h-1.4zM18 35.7h1.4q4.3 1.2 4.5 3.7q-.2 2.5 -4.5 3.7h-1.4zM29.2 2.9h17v49.2h-17zM53 1.6h5.6v4.8h-5.6zM53 8.0h5.6v4.8h-5.6zM53 14.4h5.6v4.8h-5.6zM53 20.8h5.6v4.8h-5.6zM53 29.2h5.6v4.8h-5.6zM53 35.6h5.6v4.8h-5.6zM53 42.0h5.6v4.8h-5.6zM53 48.5h5.6v4.8h-5.6z" fill="none" stroke="#a8a8a8" stroke-width=".45"/><path d="M32.6 4.6l3.6 1.8l-3.6 1.8zM38.2 9.4l3.6 1.8l-3.6 1.8zM36.2 6.4h1.2M41.8 11.2h1.2M30.4 5.6h1.6M30.4 8.0h1.6M30.4 11.0h1.6M30.4 13.6h1.6M43.6 5.8h1.8M43.6 7.6h1.8M43.6 13.0h1.8M33.4 13.2h1.6v1.4h-1.6zM39.6 5.8a1 1 0 1 0 .1 0M35 10.2v2.4h2M32.6 16.6l3.6 1.8l-3.6 1.8zM38.2 21.4l3.6 1.8l-3.6 1.8zM36.2 18.4h1.2M41.8 23.2h1.2M30.4 17.6h1.6M30.4 20.0h1.6M30.4 23.0h1.6M30.4 25.6h1.6M43.6 17.8h1.8M43.6 19.6h1.8M43.6 25.0h1.8M33.4 25.2h1.6v1.4h-1.6zM39.6 17.8a1 1 0 1 0 .1 0M35 22.2v2.4h2M32.6 28.6l3.6 1.8l-3.6 1.8zM38.2 33.4l3.6 1.8l-3.6 1.8zM36.2 30.4h1.2M41.8 35.2h1.2M30.4 29.6h1.6M30.4 32.0h1.6M30.4 35.0h1.6M30.4 37.6h1.6M43.6 29.8h1.8M43.6 31.6h1.8M43.6 37.0h1.8M33.4 37.2h1.6v1.4h-1.6zM39.6 29.8a1 1 0 1 0 .1 0M35 34.2v2.4h2M32.6 40.6l3.6 1.8l-3.6 1.8zM38.2 45.4l3.6 1.8l-3.6 1.8zM36.2 42.4h1.2M41.8 47.2h1.2M30.4 41.6h1.6M30.4 44.0h1.6M30.4 47.0h1.6M30.4 49.6h1.6M43.6 41.8h1.8M43.6 43.6h1.8M43.6 49.0h1.8M33.4 49.2h1.6v1.4h-1.6zM39.6 41.8a1 1 0 1 0 .1 0M35 46.2v2.4h2" fill="none" stroke="#c4c4c4" stroke-width=".5"/><rect x="4" y="40.5" width="9.4" height="13" fill="#fff"/><rect x="6" y="42.7" width="5.4" height="8.6" fill="#6f8f93"/></g><g transform="translate(26.7 104.0)"><rect x="0" y="0" width="63.5" height="60.8" fill="none" stroke="#3a3a3a" stroke-width=".5"/><path d="M5.8 2.9h5.6q1 0 1 1v8.6q0 1 -1 1h-5.6q-1 0 -1 -1v-8.6q0 -1 1 -1zM6.2 5.1h4.8v6.2h-4.8zM4.8 5.1h7.6M4.8 11.3h7.6M5.8 15.5h5.6q1 0 1 1v8.6q0 1 -1 1h-5.6q-1 0 -1 -1v-8.6q0 -1 1 -1zM6.2 17.7h4.8v6.2h-4.8zM4.8 17.7h7.6M4.8 23.9h7.6M18 10.5h1.4q4.3 1.2 4.5 3.7q-.2 2.5 -4.5 3.7h-1.4zM18 22.9h1.4q4.3 1.2 4.5 3.7q-.2 2.5 -4.5 3.7h-1.4zM18 35.7h1.4q4.3 1.2 4.5 3.7q-.2 2.5 -4.5 3.7h-1.4zM29.2 2.9h17v49.2h-17z" fill="none" stroke="#a8a8a8" stroke-width=".45"/><path d="M32.6 4.6l3.6 1.8l-3.6 1.8zM38.2 9.4l3.6 1.8l-3.6 1.8zM36.2 6.4h1.2M41.8 11.2h1.2M30.4 5.6h1.6M30.4 8.0h1.6M30.4 11.0h1.6M30.4 13.6h1.6M43.6 5.8h1.8M43.6 7.6h1.8M43.6 13.0h1.8M33.4 13.2h1.6v1.4h-1.6zM39.6 5.8a1 1 0 1 0 .1 0M35 10.2v2.4h2M32.6 16.6l3.6 1.8l-3.6 1.8zM38.2 21.4l3.6 1.8l-3.6 1.8zM36.2 18.4h1.2M41.8 23.2h1.2M30.4 17.6h1.6M30.4 20.0h1.6M30.4 23.0h1.6M30.4 25.6h1.6M43.6 17.8h1.8M43.6 19.6h1.8M43.6 25.0h1.8M33.4 25.2h1.6v1.4h-1.6zM39.6 17.8a1 1 0 1 0 .1 0M35 22.2v2.4h2M32.6 28.6l3.6 1.8l-3.6 1.8zM38.2 33.4l3.6 1.8l-3.6 1.8zM36.2 30.4h1.2M41.8 35.2h1.2M30.4 29.6h1.6M30.4 32.0h1.6M30.4 35.0h1.6M30.4 37.6h1.6M43.6 29.8h1.8M43.6 31.6h1.8M43.6 37.0h1.8M33.4 37.2h1.6v1.4h-1.6zM39.6 29.8a1 1 0 1 0 .1 0M35 34.2v2.4h2M32.6 40.6l3.6 1.8l-3.6 1.8zM38.2 45.4l3.6 1.8l-3.6 1.8zM36.2 42.4h1.2M41.8 47.2h1.2M30.4 41.6h1.6M30.4 44.0h1.6M30.4 47.0h1.6M30.4 49.6h1.6M43.6 41.8h1.8M43.6 43.6h1.8M43.6 49.0h1.8M33.4 49.2h1.6v1.4h-1.6zM39.6 41.8a1 1 0 1 0 .1 0M35 46.2v2.4h2" fill="none" stroke="#c4c4c4" stroke-width=".5"/><path d="M5.8 28.1h5.6q1 0 1 1v8.6q0 1 -1 1h-5.6q-1 0 -1 -1v-8.6q0 -1 1 -1zM6.2 30.3h4.8v6.2h-4.8zM4.8 30.3h7.6M4.8 36.5h7.6M5.8 40.6h5.6q1 0 1 1v8.6q0 1 -1 1h-5.6q-1 0 -1 -1v-8.6q0 -1 1 -1zM6.2 42.8h4.8v6.2h-4.8zM4.8 42.8h7.6M4.8 49.0h7.6M53 1.6h5.6v4.8h-5.6zM53 8.0h5.6v4.8h-5.6zM53 14.4h5.6v4.8h-5.6zM53 20.8h5.6v4.8h-5.6zM53 29.2h5.6v4.8h-5.6zM53 35.6h5.6v4.8h-5.6zM53 42.0h5.6v4.8h-5.6zM53 48.5h5.6v4.8h-5.6z" fill="#6a3206" stroke="#ee8826" stroke-width=".65"/></g><g transform="translate(95.4 104.0)"><rect x="0" y="0" width="63.5" height="60.8" fill="none" stroke="#3a3a3a" stroke-width=".5"/><path d="M5.8 2.9h5.6q1 0 1 1v8.6q0 1 -1 1h-5.6q-1 0 -1 -1v-8.6q0 -1 1 -1zM6.2 5.1h4.8v6.2h-4.8zM4.8 5.1h7.6M4.8 11.3h7.6M5.8 28.1h5.6q1 0 1 1v8.6q0 1 -1 1h-5.6q-1 0 -1 -1v-8.6q0 -1 1 -1zM6.2 30.3h4.8v6.2h-4.8zM4.8 30.3h7.6M4.8 36.5h7.6M18 10.5h1.4q4.3 1.2 4.5 3.7q-.2 2.5 -4.5 3.7h-1.4zM18 22.9h1.4q4.3 1.2 4.5 3.7q-.2 2.5 -4.5 3.7h-1.4zM18 35.7h1.4q4.3 1.2 4.5 3.7q-.2 2.5 -4.5 3.7h-1.4zM29.2 2.9h17v49.2h-17zM53 1.6h5.6v4.8h-5.6zM53 8.0h5.6v4.8h-5.6zM53 14.4h5.6v4.8h-5.6z" fill="none" stroke="#a8a8a8" stroke-width=".45"/><path d="M32.6 4.6l3.6 1.8l-3.6 1.8zM38.2 9.4l3.6 1.8l-3.6 1.8zM36.2 6.4h1.2M41.8 11.2h1.2M30.4 5.6h1.6M30.4 8.0h1.6M30.4 11.0h1.6M30.4 13.6h1.6M43.6 5.8h1.8M43.6 7.6h1.8M43.6 13.0h1.8M33.4 13.2h1.6v1.4h-1.6zM39.6 5.8a1 1 0 1 0 .1 0M35 10.2v2.4h2M32.6 16.6l3.6 1.8l-3.6 1.8zM38.2 21.4l3.6 1.8l-3.6 1.8zM36.2 18.4h1.2M41.8 23.2h1.2M30.4 17.6h1.6M30.4 20.0h1.6M30.4 23.0h1.6M30.4 25.6h1.6M43.6 17.8h1.8M43.6 19.6h1.8M43.6 25.0h1.8M33.4 25.2h1.6v1.4h-1.6zM39.6 17.8a1 1 0 1 0 .1 0M35 22.2v2.4h2M32.6 28.6l3.6 1.8l-3.6 1.8zM38.2 33.4l3.6 1.8l-3.6 1.8zM36.2 30.4h1.2M41.8 35.2h1.2M30.4 29.6h1.6M30.4 32.0h1.6M30.4 35.0h1.6M30.4 37.6h1.6M43.6 29.8h1.8M43.6 31.6h1.8M43.6 37.0h1.8M33.4 37.2h1.6v1.4h-1.6zM39.6 29.8a1 1 0 1 0 .1 0M35 34.2v2.4h2M32.6 40.6l3.6 1.8l-3.6 1.8zM38.2 45.4l3.6 1.8l-3.6 1.8zM36.2 42.4h1.2M41.8 47.2h1.2M30.4 41.6h1.6M30.4 44.0h1.6M30.4 47.0h1.6M30.4 49.6h1.6M43.6 41.8h1.8M43.6 43.6h1.8M43.6 49.0h1.8M33.4 49.2h1.6v1.4h-1.6zM39.6 41.8a1 1 0 1 0 .1 0M35 46.2v2.4h2" fill="none" stroke="#c4c4c4" stroke-width=".5"/><path d="M5.8 15.5h5.6q1 0 1 1v8.6q0 1 -1 1h-5.6q-1 0 -1 -1v-8.6q0 -1 1 -1zM6.2 17.7h4.8v6.2h-4.8zM4.8 17.7h7.6M4.8 23.9h7.6M5.8 40.6h5.6q1 0 1 1v8.6q0 1 -1 1h-5.6q-1 0 -1 -1v-8.6q0 -1 1 -1zM6.2 42.8h4.8v6.2h-4.8zM4.8 42.8h7.6M4.8 49.0h7.6M53 20.8h5.6v4.8h-5.6zM53 29.2h5.6v4.8h-5.6zM53 35.6h5.6v4.8h-5.6zM53 42.0h5.6v4.8h-5.6zM53 48.5h5.6v4.8h-5.6z" fill="#6a3206" stroke="#ee8826" stroke-width=".65"/></g><g transform="translate(168.4 104.0)"><rect x="0" y="0" width="63.5" height="60.8" fill="none" stroke="#3a3a3a" stroke-width=".5"/><path d="M5.8 2.9h5.6q1 0 1 1v8.6q0 1 -1 1h-5.6q-1 0 -1 -1v-8.6q0 -1 1 -1zM6.2 5.1h4.8v6.2h-4.8zM4.8 5.1h7.6M4.8 11.3h7.6M5.8 15.5h5.6q1 0 1 1v8.6q0 1 -1 1h-5.6q-1 0 -1 -1v-8.6q0 -1 1 -1zM6.2 17.7h4.8v6.2h-4.8zM4.8 17.7h7.6M4.8 23.9h7.6M5.8 28.1h5.6q1 0 1 1v8.6q0 1 -1 1h-5.6q-1 0 -1 -1v-8.6q0 -1 1 -1zM6.2 30.3h4.8v6.2h-4.8zM4.8 30.3h7.6M4.8 36.5h7.6M5.8 40.6h5.6q1 0 1 1v8.6q0 1 -1 1h-5.6q-1 0 -1 -1v-8.6q0 -1 1 -1zM6.2 42.8h4.8v6.2h-4.8zM4.8 42.8h7.6M4.8 49.0h7.6M18 10.5h1.4q4.3 1.2 4.5 3.7q-.2 2.5 -4.5 3.7h-1.4zM18 22.9h1.4q4.3 1.2 4.5 3.7q-.2 2.5 -4.5 3.7h-1.4zM18 35.7h1.4q4.3 1.2 4.5 3.7q-.2 2.5 -4.5 3.7h-1.4zM29.2 2.9h17v49.2h-17zM53 1.6h5.6v4.8h-5.6zM53 8.0h5.6v4.8h-5.6zM53 14.4h5.6v4.8h-5.6zM53 20.8h5.6v4.8h-5.6zM53 29.2h5.6v4.8h-5.6zM53 35.6h5.6v4.8h-5.6zM53 42.0h5.6v4.8h-5.6zM53 48.5h5.6v4.8h-5.6z" fill="none" stroke="#a8a8a8" stroke-width=".45"/><path d="M32.6 4.6l3.6 1.8l-3.6 1.8zM38.2 9.4l3.6 1.8l-3.6 1.8zM36.2 6.4h1.2M41.8 11.2h1.2M30.4 5.6h1.6M30.4 8.0h1.6M30.4 11.0h1.6M30.4 13.6h1.6M43.6 5.8h1.8M43.6 7.6h1.8M43.6 13.0h1.8M33.4 13.2h1.6v1.4h-1.6zM39.6 5.8a1 1 0 1 0 .1 0M35 10.2v2.4h2M32.6 16.6l3.6 1.8l-3.6 1.8zM38.2 21.4l3.6 1.8l-3.6 1.8zM36.2 18.4h1.2M41.8 23.2h1.2M30.4 17.6h1.6M30.4 20.0h1.6M30.4 23.0h1.6M30.4 25.6h1.6M43.6 17.8h1.8M43.6 19.6h1.8M43.6 25.0h1.8M33.4 25.2h1.6v1.4h-1.6zM39.6 17.8a1 1 0 1 0 .1 0M35 22.2v2.4h2M32.6 28.6l3.6 1.8l-3.6 1.8zM38.2 33.4l3.6 1.8l-3.6 1.8zM36.2 30.4h1.2M41.8 35.2h1.2M30.4 29.6h1.6M30.4 32.0h1.6M30.4 35.0h1.6M30.4 37.6h1.6M43.6 29.8h1.8M43.6 31.6h1.8M43.6 37.0h1.8M33.4 37.2h1.6v1.4h-1.6zM39.6 29.8a1 1 0 1 0 .1 0M35 34.2v2.4h2M32.6 40.6l3.6 1.8l-3.6 1.8zM38.2 45.4l3.6 1.8l-3.6 1.8zM36.2 42.4h1.2M41.8 47.2h1.2M30.4 41.6h1.6M30.4 44.0h1.6M30.4 47.0h1.6M30.4 49.6h1.6M43.6 41.8h1.8M43.6 43.6h1.8M43.6 49.0h1.8M33.4 49.2h1.6v1.4h-1.6zM39.6 41.8a1 1 0 1 0 .1 0M35 46.2v2.4h2" fill="none" stroke="#c4c4c4" stroke-width=".5"/></g><g transform="translate(237.0 104.0)"><rect x="0" y="0" width="63.5" height="60.8" fill="none" stroke="#3a3a3a" stroke-width=".5"/><path d="M5.8 2.9h5.6q1 0 1 1v8.6q0 1 -1 1h-5.6q-1 0 -1 -1v-8.6q0 -1 1 -1zM6.2 5.1h4.8v6.2h-4.8zM4.8 5.1h7.6M4.8 11.3h7.6M5.8 15.5h5.6q1 0 1 1v8.6q0 1 -1 1h-5.6q-1 0 -1 -1v-8.6q0 -1 1 -1zM6.2 17.7h4.8v6.2h-4.8zM4.8 17.7h7.6M4.8 23.9h7.6M5.8 28.1h5.6q1 0 1 1v8.6q0 1 -1 1h-5.6q-1 0 -1 -1v-8.6q0 -1 1 -1zM6.2 30.3h4.8v6.2h-4.8zM4.8 30.3h7.6M4.8 36.5h7.6M5.8 40.6h5.6q1 0 1 1v8.6q0 1 -1 1h-5.6q-1 0 -1 -1v-8.6q0 -1 1 -1zM6.2 42.8h4.8v6.2h-4.8zM4.8 42.8h7.6M4.8 49.0h7.6M18 10.5h1.4q4.3 1.2 4.5 3.7q-.2 2.5 -4.5 3.7h-1.4zM18 22.9h1.4q4.3 1.2 4.5 3.7q-.2 2.5 -4.5 3.7h-1.4zM18 35.7h1.4q4.3 1.2 4.5 3.7q-.2 2.5 -4.5 3.7h-1.4zM29.2 2.9h17v49.2h-17zM53 1.6h5.6v4.8h-5.6zM53 8.0h5.6v4.8h-5.6zM53 14.4h5.6v4.8h-5.6zM53 20.8h5.6v4.8h-5.6zM53 29.2h5.6v4.8h-5.6zM53 35.6h5.6v4.8h-5.6zM53 42.0h5.6v4.8h-5.6zM53 48.5h5.6v4.8h-5.6z" fill="none" stroke="#a8a8a8" stroke-width=".45"/><path d="M32.6 4.6l3.6 1.8l-3.6 1.8zM38.2 9.4l3.6 1.8l-3.6 1.8zM36.2 6.4h1.2M41.8 11.2h1.2M30.4 5.6h1.6M30.4 8.0h1.6M30.4 11.0h1.6M30.4 13.6h1.6M43.6 5.8h1.8M43.6 7.6h1.8M43.6 13.0h1.8M33.4 13.2h1.6v1.4h-1.6zM39.6 5.8a1 1 0 1 0 .1 0M35 10.2v2.4h2M32.6 16.6l3.6 1.8l-3.6 1.8zM38.2 21.4l3.6 1.8l-3.6 1.8zM36.2 18.4h1.2M41.8 23.2h1.2M30.4 17.6h1.6M30.4 20.0h1.6M30.4 23.0h1.6M30.4 25.6h1.6M43.6 17.8h1.8M43.6 19.6h1.8M43.6 25.0h1.8M33.4 25.2h1.6v1.4h-1.6zM39.6 17.8a1 1 0 1 0 .1 0M35 22.2v2.4h2M32.6 28.6l3.6 1.8l-3.6 1.8zM38.2 33.4l3.6 1.8l-3.6 1.8zM36.2 30.4h1.2M41.8 35.2h1.2M30.4 29.6h1.6M30.4 32.0h1.6M30.4 35.0h1.6M30.4 37.6h1.6M43.6 29.8h1.8M43.6 31.6h1.8M43.6 37.0h1.8M33.4 37.2h1.6v1.4h-1.6zM39.6 29.8a1 1 0 1 0 .1 0M35 34.2v2.4h2M32.6 40.6l3.6 1.8l-3.6 1.8zM38.2 45.4l3.6 1.8l-3.6 1.8zM36.2 42.4h1.2M41.8 47.2h1.2M30.4 41.6h1.6M30.4 44.0h1.6M30.4 47.0h1.6M30.4 49.6h1.6M43.6 41.8h1.8M43.6 43.6h1.8M43.6 49.0h1.8M33.4 49.2h1.6v1.4h-1.6zM39.6 41.8a1 1 0 1 0 .1 0M35 46.2v2.4h2" fill="none" stroke="#c4c4c4" stroke-width=".5"/></g><g transform="translate(310.1 104.0)"><rect x="0" y="0" width="63.5" height="60.8" fill="none" stroke="#3a3a3a" stroke-width=".5"/><path d="M5.8 2.9h5.6q1 0 1 1v8.6q0 1 -1 1h-5.6q-1 0 -1 -1v-8.6q0 -1 1 -1zM6.2 5.1h4.8v6.2h-4.8zM4.8 5.1h7.6M4.8 11.3h7.6M5.8 15.5h5.6q1 0 1 1v8.6q0 1 -1 1h-5.6q-1 0 -1 -1v-8.6q0 -1 1 -1zM6.2 17.7h4.8v6.2h-4.8zM4.8 17.7h7.6M4.8 23.9h7.6M5.8 28.1h5.6q1 0 1 1v8.6q0 1 -1 1h-5.6q-1 0 -1 -1v-8.6q0 -1 1 -1zM6.2 30.3h4.8v6.2h-4.8zM4.8 30.3h7.6M4.8 36.5h7.6M5.8 40.6h5.6q1 0 1 1v8.6q0 1 -1 1h-5.6q-1 0 -1 -1v-8.6q0 -1 1 -1zM6.2 42.8h4.8v6.2h-4.8zM4.8 42.8h7.6M4.8 49.0h7.6M18 10.5h1.4q4.3 1.2 4.5 3.7q-.2 2.5 -4.5 3.7h-1.4zM18 22.9h1.4q4.3 1.2 4.5 3.7q-.2 2.5 -4.5 3.7h-1.4zM18 35.7h1.4q4.3 1.2 4.5 3.7q-.2 2.5 -4.5 3.7h-1.4zM29.2 2.9h17v49.2h-17zM53 1.6h5.6v4.8h-5.6zM53 8.0h5.6v4.8h-5.6zM53 14.4h5.6v4.8h-5.6zM53 20.8h5.6v4.8h-5.6zM53 29.2h5.6v4.8h-5.6zM53 35.6h5.6v4.8h-5.6zM53 42.0h5.6v4.8h-5.6zM53 48.5h5.6v4.8h-5.6z" fill="none" stroke="#a8a8a8" stroke-width=".45"/><path d="M32.6 4.6l3.6 1.8l-3.6 1.8zM38.2 9.4l3.6 1.8l-3.6 1.8zM36.2 6.4h1.2M41.8 11.2h1.2M30.4 5.6h1.6M30.4 8.0h1.6M30.4 11.0h1.6M30.4 13.6h1.6M43.6 5.8h1.8M43.6 7.6h1.8M43.6 13.0h1.8M33.4 13.2h1.6v1.4h-1.6zM39.6 5.8a1 1 0 1 0 .1 0M35 10.2v2.4h2M32.6 16.6l3.6 1.8l-3.6 1.8zM38.2 21.4l3.6 1.8l-3.6 1.8zM36.2 18.4h1.2M41.8 23.2h1.2M30.4 17.6h1.6M30.4 20.0h1.6M30.4 23.0h1.6M30.4 25.6h1.6M43.6 17.8h1.8M43.6 19.6h1.8M43.6 25.0h1.8M33.4 25.2h1.6v1.4h-1.6zM39.6 17.8a1 1 0 1 0 .1 0M35 22.2v2.4h2M32.6 28.6l3.6 1.8l-3.6 1.8zM38.2 33.4l3.6 1.8l-3.6 1.8zM36.2 30.4h1.2M41.8 35.2h1.2M30.4 29.6h1.6M30.4 32.0h1.6M30.4 35.0h1.6M30.4 37.6h1.6M43.6 29.8h1.8M43.6 31.6h1.8M43.6 37.0h1.8M33.4 37.2h1.6v1.4h-1.6zM39.6 29.8a1 1 0 1 0 .1 0M35 34.2v2.4h2M32.6 40.6l3.6 1.8l-3.6 1.8zM38.2 45.4l3.6 1.8l-3.6 1.8zM36.2 42.4h1.2M41.8 47.2h1.2M30.4 41.6h1.6M30.4 44.0h1.6M30.4 47.0h1.6M30.4 49.6h1.6M43.6 41.8h1.8M43.6 43.6h1.8M43.6 49.0h1.8M33.4 49.2h1.6v1.4h-1.6zM39.6 41.8a1 1 0 1 0 .1 0M35 46.2v2.4h2" fill="none" stroke="#c4c4c4" stroke-width=".5"/></g><g transform="translate(378.7 104.0)"><rect x="0" y="0" width="63.5" height="60.8" fill="none" stroke="#3a3a3a" stroke-width=".5"/><path d="M5.8 2.9h5.6q1 0 1 1v8.6q0 1 -1 1h-5.6q-1 0 -1 -1v-8.6q0 -1 1 -1zM6.2 5.1h4.8v6.2h-4.8zM4.8 5.1h7.6M4.8 11.3h7.6M5.8 15.5h5.6q1 0 1 1v8.6q0 1 -1 1h-5.6q-1 0 -1 -1v-8.6q0 -1 1 -1zM6.2 17.7h4.8v6.2h-4.8zM4.8 17.7h7.6M4.8 23.9h7.6M5.8 28.1h5.6q1 0 1 1v8.6q0 1 -1 1h-5.6q-1 0 -1 -1v-8.6q0 -1 1 -1zM6.2 30.3h4.8v6.2h-4.8zM4.8 30.3h7.6M4.8 36.5h7.6M5.8 40.6h5.6q1 0 1 1v8.6q0 1 -1 1h-5.6q-1 0 -1 -1v-8.6q0 -1 1 -1zM6.2 42.8h4.8v6.2h-4.8zM4.8 42.8h7.6M4.8 49.0h7.6M18 10.5h1.4q4.3 1.2 4.5 3.7q-.2 2.5 -4.5 3.7h-1.4zM18 22.9h1.4q4.3 1.2 4.5 3.7q-.2 2.5 -4.5 3.7h-1.4zM18 35.7h1.4q4.3 1.2 4.5 3.7q-.2 2.5 -4.5 3.7h-1.4zM29.2 2.9h17v49.2h-17zM53 1.6h5.6v4.8h-5.6zM53 8.0h5.6v4.8h-5.6zM53 14.4h5.6v4.8h-5.6zM53 20.8h5.6v4.8h-5.6zM53 29.2h5.6v4.8h-5.6zM53 35.6h5.6v4.8h-5.6zM53 42.0h5.6v4.8h-5.6zM53 48.5h5.6v4.8h-5.6z" fill="none" stroke="#a8a8a8" stroke-width=".45"/><path d="M32.6 4.6l3.6 1.8l-3.6 1.8zM38.2 9.4l3.6 1.8l-3.6 1.8zM36.2 6.4h1.2M41.8 11.2h1.2M30.4 5.6h1.6M30.4 8.0h1.6M30.4 11.0h1.6M30.4 13.6h1.6M43.6 5.8h1.8M43.6 7.6h1.8M43.6 13.0h1.8M33.4 13.2h1.6v1.4h-1.6zM39.6 5.8a1 1 0 1 0 .1 0M35 10.2v2.4h2M32.6 16.6l3.6 1.8l-3.6 1.8zM38.2 21.4l3.6 1.8l-3.6 1.8zM36.2 18.4h1.2M41.8 23.2h1.2M30.4 17.6h1.6M30.4 20.0h1.6M30.4 23.0h1.6M30.4 25.6h1.6M43.6 17.8h1.8M43.6 19.6h1.8M43.6 25.0h1.8M33.4 25.2h1.6v1.4h-1.6zM39.6 17.8a1 1 0 1 0 .1 0M35 22.2v2.4h2M32.6 28.6l3.6 1.8l-3.6 1.8zM38.2 33.4l3.6 1.8l-3.6 1.8zM36.2 30.4h1.2M41.8 35.2h1.2M30.4 29.6h1.6M30.4 32.0h1.6M30.4 35.0h1.6M30.4 37.6h1.6M43.6 29.8h1.8M43.6 31.6h1.8M43.6 37.0h1.8M33.4 37.2h1.6v1.4h-1.6zM39.6 29.8a1 1 0 1 0 .1 0M35 34.2v2.4h2M32.6 40.6l3.6 1.8l-3.6 1.8zM38.2 45.4l3.6 1.8l-3.6 1.8zM36.2 42.4h1.2M41.8 47.2h1.2M30.4 41.6h1.6M30.4 44.0h1.6M30.4 47.0h1.6M30.4 49.6h1.6M43.6 41.8h1.8M43.6 43.6h1.8M43.6 49.0h1.8M33.4 49.2h1.6v1.4h-1.6zM39.6 41.8a1 1 0 1 0 .1 0M35 46.2v2.4h2" fill="none" stroke="#c4c4c4" stroke-width=".5"/></g><g transform="translate(26.7 169.9)"><rect x="0" y="0" width="63.5" height="60.8" fill="none" stroke="#3a3a3a" stroke-width=".5"/><path d="M5.8 2.9h5.6q1 0 1 1v8.6q0 1 -1 1h-5.6q-1 0 -1 -1v-8.6q0 -1 1 -1zM6.2 5.1h4.8v6.2h-4.8zM4.8 5.1h7.6M4.8 11.3h7.6M5.8 15.5h5.6q1 0 1 1v8.6q0 1 -1 1h-5.6q-1 0 -1 -1v-8.6q0 -1 1 -1zM6.2 17.7h4.8v6.2h-4.8zM4.8 17.7h7.6M4.8 23.9h7.6M5.8 28.1h5.6q1 0 1 1v8.6q0 1 -1 1h-5.6q-1 0 -1 -1v-8.6q0 -1 1 -1zM6.2 30.3h4.8v6.2h-4.8zM4.8 30.3h7.6M4.8 36.5h7.6M5.8 40.6h5.6q1 0 1 1v8.6q0 1 -1 1h-5.6q-1 0 -1 -1v-8.6q0 -1 1 -1zM6.2 42.8h4.8v6.2h-4.8zM4.8 42.8h7.6M4.8 49.0h7.6M18 10.5h1.4q4.3 1.2 4.5 3.7q-.2 2.5 -4.5 3.7h-1.4zM18 22.9h1.4q4.3 1.2 4.5 3.7q-.2 2.5 -4.5 3.7h-1.4zM18 35.7h1.4q4.3 1.2 4.5 3.7q-.2 2.5 -4.5 3.7h-1.4zM29.2 2.9h17v49.2h-17zM53 1.6h5.6v4.8h-5.6zM53 8.0h5.6v4.8h-5.6zM53 14.4h5.6v4.8h-5.6zM53 20.8h5.6v4.8h-5.6zM53 29.2h5.6v4.8h-5.6zM53 35.6h5.6v4.8h-5.6zM53 42.0h5.6v4.8h-5.6zM53 48.5h5.6v4.8h-5.6z" fill="none" stroke="#a8a8a8" stroke-width=".45"/><path d="M32.6 4.6l3.6 1.8l-3.6 1.8zM38.2 9.4l3.6 1.8l-3.6 1.8zM36.2 6.4h1.2M41.8 11.2h1.2M30.4 5.6h1.6M30.4 8.0h1.6M30.4 11.0h1.6M30.4 13.6h1.6M43.6 5.8h1.8M43.6 7.6h1.8M43.6 13.0h1.8M33.4 13.2h1.6v1.4h-1.6zM39.6 5.8a1 1 0 1 0 .1 0M35 10.2v2.4h2M32.6 16.6l3.6 1.8l-3.6 1.8zM38.2 21.4l3.6 1.8l-3.6 1.8zM36.2 18.4h1.2M41.8 23.2h1.2M30.4 17.6h1.6M30.4 20.0h1.6M30.4 23.0h1.6M30.4 25.6h1.6M43.6 17.8h1.8M43.6 19.6h1.8M43.6 25.0h1.8M33.4 25.2h1.6v1.4h-1.6zM39.6 17.8a1 1 0 1 0 .1 0M35 22.2v2.4h2M32.6 28.6l3.6 1.8l-3.6 1.8zM38.2 33.4l3.6 1.8l-3.6 1.8zM36.2 30.4h1.2M41.8 35.2h1.2M30.4 29.6h1.6M30.4 32.0h1.6M30.4 35.0h1.6M30.4 37.6h1.6M43.6 29.8h1.8M43.6 31.6h1.8M43.6 37.0h1.8M33.4 37.2h1.6v1.4h-1.6zM39.6 29.8a1 1 0 1 0 .1 0M35 34.2v2.4h2M32.6 40.6l3.6 1.8l-3.6 1.8zM38.2 45.4l3.6 1.8l-3.6 1.8zM36.2 42.4h1.2M41.8 47.2h1.2M30.4 41.6h1.6M30.4 44.0h1.6M30.4 47.0h1.6M30.4 49.6h1.6M43.6 41.8h1.8M43.6 43.6h1.8M43.6 49.0h1.8M33.4 49.2h1.6v1.4h-1.6zM39.6 41.8a1 1 0 1 0 .1 0M35 46.2v2.4h2" fill="none" stroke="#c4c4c4" stroke-width=".5"/></g><g transform="translate(95.4 169.9)"><rect x="0" y="0" width="63.5" height="60.8" fill="none" stroke="#3a3a3a" stroke-width=".5"/><path d="M5.8 2.9h5.6q1 0 1 1v8.6q0 1 -1 1h-5.6q-1 0 -1 -1v-8.6q0 -1 1 -1zM6.2 5.1h4.8v6.2h-4.8zM4.8 5.1h7.6M4.8 11.3h7.6M5.8 15.5h5.6q1 0 1 1v8.6q0 1 -1 1h-5.6q-1 0 -1 -1v-8.6q0 -1 1 -1zM6.2 17.7h4.8v6.2h-4.8zM4.8 17.7h7.6M4.8 23.9h7.6M5.8 28.1h5.6q1 0 1 1v8.6q0 1 -1 1h-5.6q-1 0 -1 -1v-8.6q0 -1 1 -1zM6.2 30.3h4.8v6.2h-4.8zM4.8 30.3h7.6M4.8 36.5h7.6M5.8 40.6h5.6q1 0 1 1v8.6q0 1 -1 1h-5.6q-1 0 -1 -1v-8.6q0 -1 1 -1zM6.2 42.8h4.8v6.2h-4.8zM4.8 42.8h7.6M4.8 49.0h7.6M18 10.5h1.4q4.3 1.2 4.5 3.7q-.2 2.5 -4.5 3.7h-1.4zM18 22.9h1.4q4.3 1.2 4.5 3.7q-.2 2.5 -4.5 3.7h-1.4zM18 35.7h1.4q4.3 1.2 4.5 3.7q-.2 2.5 -4.5 3.7h-1.4zM29.2 2.9h17v49.2h-17zM53 1.6h5.6v4.8h-5.6zM53 8.0h5.6v4.8h-5.6zM53 14.4h5.6v4.8h-5.6zM53 20.8h5.6v4.8h-5.6zM53 29.2h5.6v4.8h-5.6zM53 35.6h5.6v4.8h-5.6zM53 42.0h5.6v4.8h-5.6zM53 48.5h5.6v4.8h-5.6z" fill="none" stroke="#a8a8a8" stroke-width=".45"/><path d="M32.6 4.6l3.6 1.8l-3.6 1.8zM38.2 9.4l3.6 1.8l-3.6 1.8zM36.2 6.4h1.2M41.8 11.2h1.2M30.4 5.6h1.6M30.4 8.0h1.6M30.4 11.0h1.6M30.4 13.6h1.6M43.6 5.8h1.8M43.6 7.6h1.8M43.6 13.0h1.8M33.4 13.2h1.6v1.4h-1.6zM39.6 5.8a1 1 0 1 0 .1 0M35 10.2v2.4h2M32.6 16.6l3.6 1.8l-3.6 1.8zM38.2 21.4l3.6 1.8l-3.6 1.8zM36.2 18.4h1.2M41.8 23.2h1.2M30.4 17.6h1.6M30.4 20.0h1.6M30.4 23.0h1.6M30.4 25.6h1.6M43.6 17.8h1.8M43.6 19.6h1.8M43.6 25.0h1.8M33.4 25.2h1.6v1.4h-1.6zM39.6 17.8a1 1 0 1 0 .1 0M35 22.2v2.4h2M32.6 28.6l3.6 1.8l-3.6 1.8zM38.2 33.4l3.6 1.8l-3.6 1.8zM36.2 30.4h1.2M41.8 35.2h1.2M30.4 29.6h1.6M30.4 32.0h1.6M30.4 35.0h1.6M30.4 37.6h1.6M43.6 29.8h1.8M43.6 31.6h1.8M43.6 37.0h1.8M33.4 37.2h1.6v1.4h-1.6zM39.6 29.8a1 1 0 1 0 .1 0M35 34.2v2.4h2M32.6 40.6l3.6 1.8l-3.6 1.8zM38.2 45.4l3.6 1.8l-3.6 1.8zM36.2 42.4h1.2M41.8 47.2h1.2M30.4 41.6h1.6M30.4 44.0h1.6M30.4 47.0h1.6M30.4 49.6h1.6M43.6 41.8h1.8M43.6 43.6h1.8M43.6 49.0h1.8M33.4 49.2h1.6v1.4h-1.6zM39.6 41.8a1 1 0 1 0 .1 0M35 46.2v2.4h2" fill="none" stroke="#c4c4c4" stroke-width=".5"/></g><g transform="translate(168.4 169.9)"><rect x="0" y="0" width="63.5" height="60.8" fill="none" stroke="#3a3a3a" stroke-width=".5"/><path d="M5.8 2.9h5.6q1 0 1 1v8.6q0 1 -1 1h-5.6q-1 0 -1 -1v-8.6q0 -1 1 -1zM6.2 5.1h4.8v6.2h-4.8zM4.8 5.1h7.6M4.8 11.3h7.6M5.8 15.5h5.6q1 0 1 1v8.6q0 1 -1 1h-5.6q-1 0 -1 -1v-8.6q0 -1 1 -1zM6.2 17.7h4.8v6.2h-4.8zM4.8 17.7h7.6M4.8 23.9h7.6M5.8 28.1h5.6q1 0 1 1v8.6q0 1 -1 1h-5.6q-1 0 -1 -1v-8.6q0 -1 1 -1zM6.2 30.3h4.8v6.2h-4.8zM4.8 30.3h7.6M4.8 36.5h7.6M5.8 40.6h5.6q1 0 1 1v8.6q0 1 -1 1h-5.6q-1 0 -1 -1v-8.6q0 -1 1 -1zM6.2 42.8h4.8v6.2h-4.8zM4.8 42.8h7.6M4.8 49.0h7.6M18 10.5h1.4q4.3 1.2 4.5 3.7q-.2 2.5 -4.5 3.7h-1.4zM18 22.9h1.4q4.3 1.2 4.5 3.7q-.2 2.5 -4.5 3.7h-1.4zM18 35.7h1.4q4.3 1.2 4.5 3.7q-.2 2.5 -4.5 3.7h-1.4zM29.2 2.9h17v49.2h-17zM53 1.6h5.6v4.8h-5.6zM53 8.0h5.6v4.8h-5.6zM53 14.4h5.6v4.8h-5.6zM53 20.8h5.6v4.8h-5.6zM53 29.2h5.6v4.8h-5.6zM53 35.6h5.6v4.8h-5.6zM53 42.0h5.6v4.8h-5.6zM53 48.5h5.6v4.8h-5.6z" fill="none" stroke="#a8a8a8" stroke-width=".45"/><path d="M32.6 4.6l3.6 1.8l-3.6 1.8zM38.2 9.4l3.6 1.8l-3.6 1.8zM36.2 6.4h1.2M41.8 11.2h1.2M30.4 5.6h1.6M30.4 8.0h1.6M30.4 11.0h1.6M30.4 13.6h1.6M43.6 5.8h1.8M43.6 7.6h1.8M43.6 13.0h1.8M33.4 13.2h1.6v1.4h-1.6zM39.6 5.8a1 1 0 1 0 .1 0M35 10.2v2.4h2M32.6 16.6l3.6 1.8l-3.6 1.8zM38.2 21.4l3.6 1.8l-3.6 1.8zM36.2 18.4h1.2M41.8 23.2h1.2M30.4 17.6h1.6M30.4 20.0h1.6M30.4 23.0h1.6M30.4 25.6h1.6M43.6 17.8h1.8M43.6 19.6h1.8M43.6 25.0h1.8M33.4 25.2h1.6v1.4h-1.6zM39.6 17.8a1 1 0 1 0 .1 0M35 22.2v2.4h2M32.6 28.6l3.6 1.8l-3.6 1.8zM38.2 33.4l3.6 1.8l-3.6 1.8zM36.2 30.4h1.2M41.8 35.2h1.2M30.4 29.6h1.6M30.4 32.0h1.6M30.4 35.0h1.6M30.4 37.6h1.6M43.6 29.8h1.8M43.6 31.6h1.8M43.6 37.0h1.8M33.4 37.2h1.6v1.4h-1.6zM39.6 29.8a1 1 0 1 0 .1 0M35 34.2v2.4h2M32.6 40.6l3.6 1.8l-3.6 1.8zM38.2 45.4l3.6 1.8l-3.6 1.8zM36.2 42.4h1.2M41.8 47.2h1.2M30.4 41.6h1.6M30.4 44.0h1.6M30.4 47.0h1.6M30.4 49.6h1.6M43.6 41.8h1.8M43.6 43.6h1.8M43.6 49.0h1.8M33.4 49.2h1.6v1.4h-1.6zM39.6 41.8a1 1 0 1 0 .1 0M35 46.2v2.4h2" fill="none" stroke="#c4c4c4" stroke-width=".5"/></g><g transform="translate(237.0 169.9)"><rect x="0" y="0" width="63.5" height="60.8" fill="none" stroke="#3a3a3a" stroke-width=".5"/><path d="M5.8 2.9h5.6q1 0 1 1v8.6q0 1 -1 1h-5.6q-1 0 -1 -1v-8.6q0 -1 1 -1zM6.2 5.1h4.8v6.2h-4.8zM4.8 5.1h7.6M4.8 11.3h7.6M5.8 15.5h5.6q1 0 1 1v8.6q0 1 -1 1h-5.6q-1 0 -1 -1v-8.6q0 -1 1 -1zM6.2 17.7h4.8v6.2h-4.8zM4.8 17.7h7.6M4.8 23.9h7.6M5.8 28.1h5.6q1 0 1 1v8.6q0 1 -1 1h-5.6q-1 0 -1 -1v-8.6q0 -1 1 -1zM6.2 30.3h4.8v6.2h-4.8zM4.8 30.3h7.6M4.8 36.5h7.6M5.8 40.6h5.6q1 0 1 1v8.6q0 1 -1 1h-5.6q-1 0 -1 -1v-8.6q0 -1 1 -1zM6.2 42.8h4.8v6.2h-4.8zM4.8 42.8h7.6M4.8 49.0h7.6M18 10.5h1.4q4.3 1.2 4.5 3.7q-.2 2.5 -4.5 3.7h-1.4zM18 22.9h1.4q4.3 1.2 4.5 3.7q-.2 2.5 -4.5 3.7h-1.4zM18 35.7h1.4q4.3 1.2 4.5 3.7q-.2 2.5 -4.5 3.7h-1.4zM29.2 2.9h17v49.2h-17zM53 1.6h5.6v4.8h-5.6zM53 8.0h5.6v4.8h-5.6zM53 14.4h5.6v4.8h-5.6zM53 20.8h5.6v4.8h-5.6zM53 29.2h5.6v4.8h-5.6zM53 35.6h5.6v4.8h-5.6zM53 42.0h5.6v4.8h-5.6zM53 48.5h5.6v4.8h-5.6z" fill="none" stroke="#a8a8a8" stroke-width=".45"/><path d="M32.6 4.6l3.6 1.8l-3.6 1.8zM38.2 9.4l3.6 1.8l-3.6 1.8zM36.2 6.4h1.2M41.8 11.2h1.2M30.4 5.6h1.6M30.4 8.0h1.6M30.4 11.0h1.6M30.4 13.6h1.6M43.6 5.8h1.8M43.6 7.6h1.8M43.6 13.0h1.8M33.4 13.2h1.6v1.4h-1.6zM39.6 5.8a1 1 0 1 0 .1 0M35 10.2v2.4h2M32.6 16.6l3.6 1.8l-3.6 1.8zM38.2 21.4l3.6 1.8l-3.6 1.8zM36.2 18.4h1.2M41.8 23.2h1.2M30.4 17.6h1.6M30.4 20.0h1.6M30.4 23.0h1.6M30.4 25.6h1.6M43.6 17.8h1.8M43.6 19.6h1.8M43.6 25.0h1.8M33.4 25.2h1.6v1.4h-1.6zM39.6 17.8a1 1 0 1 0 .1 0M35 22.2v2.4h2M32.6 28.6l3.6 1.8l-3.6 1.8zM38.2 33.4l3.6 1.8l-3.6 1.8zM36.2 30.4h1.2M41.8 35.2h1.2M30.4 29.6h1.6M30.4 32.0h1.6M30.4 35.0h1.6M30.4 37.6h1.6M43.6 29.8h1.8M43.6 31.6h1.8M43.6 37.0h1.8M33.4 37.2h1.6v1.4h-1.6zM39.6 29.8a1 1 0 1 0 .1 0M35 34.2v2.4h2M32.6 40.6l3.6 1.8l-3.6 1.8zM38.2 45.4l3.6 1.8l-3.6 1.8zM36.2 42.4h1.2M41.8 47.2h1.2M30.4 41.6h1.6M30.4 44.0h1.6M30.4 47.0h1.6M30.4 49.6h1.6M43.6 41.8h1.8M43.6 43.6h1.8M43.6 49.0h1.8M33.4 49.2h1.6v1.4h-1.6zM39.6 41.8a1 1 0 1 0 .1 0M35 46.2v2.4h2" fill="none" stroke="#c4c4c4" stroke-width=".5"/></g><g transform="translate(310.1 169.9)"><rect x="0" y="0" width="63.5" height="60.8" fill="none" stroke="#3a3a3a" stroke-width=".5"/><path d="M5.8 2.9h5.6q1 0 1 1v8.6q0 1 -1 1h-5.6q-1 0 -1 -1v-8.6q0 -1 1 -1zM6.2 5.1h4.8v6.2h-4.8zM4.8 5.1h7.6M4.8 11.3h7.6M5.8 15.5h5.6q1 0 1 1v8.6q0 1 -1 1h-5.6q-1 0 -1 -1v-8.6q0 -1 1 -1zM6.2 17.7h4.8v6.2h-4.8zM4.8 17.7h7.6M4.8 23.9h7.6M5.8 28.1h5.6q1 0 1 1v8.6q0 1 -1 1h-5.6q-1 0 -1 -1v-8.6q0 -1 1 -1zM6.2 30.3h4.8v6.2h-4.8zM4.8 30.3h7.6M4.8 36.5h7.6M5.8 40.6h5.6q1 0 1 1v8.6q0 1 -1 1h-5.6q-1 0 -1 -1v-8.6q0 -1 1 -1zM6.2 42.8h4.8v6.2h-4.8zM4.8 42.8h7.6M4.8 49.0h7.6M18 10.5h1.4q4.3 1.2 4.5 3.7q-.2 2.5 -4.5 3.7h-1.4zM18 22.9h1.4q4.3 1.2 4.5 3.7q-.2 2.5 -4.5 3.7h-1.4zM18 35.7h1.4q4.3 1.2 4.5 3.7q-.2 2.5 -4.5 3.7h-1.4zM29.2 2.9h17v49.2h-17zM53 1.6h5.6v4.8h-5.6zM53 8.0h5.6v4.8h-5.6zM53 14.4h5.6v4.8h-5.6zM53 20.8h5.6v4.8h-5.6zM53 29.2h5.6v4.8h-5.6zM53 35.6h5.6v4.8h-5.6zM53 42.0h5.6v4.8h-5.6zM53 48.5h5.6v4.8h-5.6z" fill="none" stroke="#a8a8a8" stroke-width=".45"/><path d="M32.6 4.6l3.6 1.8l-3.6 1.8zM38.2 9.4l3.6 1.8l-3.6 1.8zM36.2 6.4h1.2M41.8 11.2h1.2M30.4 5.6h1.6M30.4 8.0h1.6M30.4 11.0h1.6M30.4 13.6h1.6M43.6 5.8h1.8M43.6 7.6h1.8M43.6 13.0h1.8M33.4 13.2h1.6v1.4h-1.6zM39.6 5.8a1 1 0 1 0 .1 0M35 10.2v2.4h2M32.6 16.6l3.6 1.8l-3.6 1.8zM38.2 21.4l3.6 1.8l-3.6 1.8zM36.2 18.4h1.2M41.8 23.2h1.2M30.4 17.6h1.6M30.4 20.0h1.6M30.4 23.0h1.6M30.4 25.6h1.6M43.6 17.8h1.8M43.6 19.6h1.8M43.6 25.0h1.8M33.4 25.2h1.6v1.4h-1.6zM39.6 17.8a1 1 0 1 0 .1 0M35 22.2v2.4h2M32.6 28.6l3.6 1.8l-3.6 1.8zM38.2 33.4l3.6 1.8l-3.6 1.8zM36.2 30.4h1.2M41.8 35.2h1.2M30.4 29.6h1.6M30.4 32.0h1.6M30.4 35.0h1.6M30.4 37.6h1.6M43.6 29.8h1.8M43.6 31.6h1.8M43.6 37.0h1.8M33.4 37.2h1.6v1.4h-1.6zM39.6 29.8a1 1 0 1 0 .1 0M35 34.2v2.4h2M32.6 40.6l3.6 1.8l-3.6 1.8zM38.2 45.4l3.6 1.8l-3.6 1.8zM36.2 42.4h1.2M41.8 47.2h1.2M30.4 41.6h1.6M30.4 44.0h1.6M30.4 47.0h1.6M30.4 49.6h1.6M43.6 41.8h1.8M43.6 43.6h1.8M43.6 49.0h1.8M33.4 49.2h1.6v1.4h-1.6zM39.6 41.8a1 1 0 1 0 .1 0M35 46.2v2.4h2" fill="none" stroke="#c4c4c4" stroke-width=".5"/></g><g transform="translate(378.7 169.9)"><rect x="0" y="0" width="63.5" height="60.8" fill="none" stroke="#3a3a3a" stroke-width=".5"/><path d="M5.8 2.9h5.6q1 0 1 1v8.6q0 1 -1 1h-5.6q-1 0 -1 -1v-8.6q0 -1 1 -1zM6.2 5.1h4.8v6.2h-4.8zM4.8 5.1h7.6M4.8 11.3h7.6M5.8 15.5h5.6q1 0 1 1v8.6q0 1 -1 1h-5.6q-1 0 -1 -1v-8.6q0 -1 1 -1zM6.2 17.7h4.8v6.2h-4.8zM4.8 17.7h7.6M4.8 23.9h7.6M5.8 28.1h5.6q1 0 1 1v8.6q0 1 -1 1h-5.6q-1 0 -1 -1v-8.6q0 -1 1 -1zM6.2 30.3h4.8v6.2h-4.8zM4.8 30.3h7.6M4.8 36.5h7.6M5.8 40.6h5.6q1 0 1 1v8.6q0 1 -1 1h-5.6q-1 0 -1 -1v-8.6q0 -1 1 -1zM6.2 42.8h4.8v6.2h-4.8zM4.8 42.8h7.6M4.8 49.0h7.6M18 10.5h1.4q4.3 1.2 4.5 3.7q-.2 2.5 -4.5 3.7h-1.4zM18 22.9h1.4q4.3 1.2 4.5 3.7q-.2 2.5 -4.5 3.7h-1.4zM18 35.7h1.4q4.3 1.2 4.5 3.7q-.2 2.5 -4.5 3.7h-1.4zM29.2 2.9h17v49.2h-17zM53 1.6h5.6v4.8h-5.6zM53 8.0h5.6v4.8h-5.6zM53 14.4h5.6v4.8h-5.6zM53 20.8h5.6v4.8h-5.6zM53 29.2h5.6v4.8h-5.6zM53 35.6h5.6v4.8h-5.6zM53 42.0h5.6v4.8h-5.6zM53 48.5h5.6v4.8h-5.6z" fill="none" stroke="#a8a8a8" stroke-width=".45"/><path d="M32.6 4.6l3.6 1.8l-3.6 1.8zM38.2 9.4l3.6 1.8l-3.6 1.8zM36.2 6.4h1.2M41.8 11.2h1.2M30.4 5.6h1.6M30.4 8.0h1.6M30.4 11.0h1.6M30.4 13.6h1.6M43.6 5.8h1.8M43.6 7.6h1.8M43.6 13.0h1.8M33.4 13.2h1.6v1.4h-1.6zM39.6 5.8a1 1 0 1 0 .1 0M35 10.2v2.4h2M32.6 16.6l3.6 1.8l-3.6 1.8zM38.2 21.4l3.6 1.8l-3.6 1.8zM36.2 18.4h1.2M41.8 23.2h1.2M30.4 17.6h1.6M30.4 20.0h1.6M30.4 23.0h1.6M30.4 25.6h1.6M43.6 17.8h1.8M43.6 19.6h1.8M43.6 25.0h1.8M33.4 25.2h1.6v1.4h-1.6zM39.6 17.8a1 1 0 1 0 .1 0M35 22.2v2.4h2M32.6 28.6l3.6 1.8l-3.6 1.8zM38.2 33.4l3.6 1.8l-3.6 1.8zM36.2 30.4h1.2M41.8 35.2h1.2M30.4 29.6h1.6M30.4 32.0h1.6M30.4 35.0h1.6M30.4 37.6h1.6M43.6 29.8h1.8M43.6 31.6h1.8M43.6 37.0h1.8M33.4 37.2h1.6v1.4h-1.6zM39.6 29.8a1 1 0 1 0 .1 0M35 34.2v2.4h2M32.6 40.6l3.6 1.8l-3.6 1.8zM38.2 45.4l3.6 1.8l-3.6 1.8zM36.2 42.4h1.2M41.8 47.2h1.2M30.4 41.6h1.6M30.4 44.0h1.6M30.4 47.0h1.6M30.4 49.6h1.6M43.6 41.8h1.8M43.6 43.6h1.8M43.6 49.0h1.8M33.4 49.2h1.6v1.4h-1.6zM39.6 41.8a1 1 0 1 0 .1 0M35 46.2v2.4h2" fill="none" stroke="#c4c4c4" stroke-width=".5"/></g></svg>
<div class="a" style="left:743.8px;top:113.3px;width:8.6px;height:218.7px;background:#fff;"></div>
<div class="a" style="left:743.8px;top:113.3px;width:0.5px;height:218.7px;background:#e0e0e0;"></div>
<svg style="left:745.4px;top:116.4px" width="5.6" height="3.6" viewBox="0 0 5.6 3.6"><path d="M.5 3L2.8 .7L5.1 3" fill="none" stroke="#4a4a4a" stroke-width="1.1"/></svg>
<svg style="left:745.4px;top:325.8px" width="5.6" height="3.6" viewBox="0 0 5.6 3.6"><path d="M.5 .6L2.8 2.9L5.1 .6" fill="none" stroke="#4a4a4a" stroke-width="1.1"/></svg>
<div class="sb" style="left:746px;top:283.2px;width:4px;height:18.2px"></div>
<div class="a" style="left:392.6px;top:332.0px;width:359.8px;height:8.4px;background:#fff;"></div>
<div class="a" style="left:392.6px;top:332.0px;width:359.8px;height:0.5px;background:#e0e0e0;"></div>
<svg style="left:395.6px;top:333.4px" width="3.6" height="5.6" viewBox="0 0 3.6 5.6"><path d="M3 .5L.7 2.8L3 5.1" fill="none" stroke="#4a4a4a" stroke-width="1.1"/></svg>
<svg style="left:738.0px;top:333.4px" width="3.6" height="5.6" viewBox="0 0 3.6 5.6"><path d="M.6 .5L2.9 2.8L.6 5.1" fill="none" stroke="#4a4a4a" stroke-width="1.1"/></svg>
<div class="sb" style="left:430.9px;top:334px;width:20.4px;height:4px"></div>
<svg style="left:745.3px;top:333.0px" width="6" height="6" viewBox="0 0 6 6"><path d="M.6 5.4L5.4 .6M3 5.4L5.4 3" stroke="#888" stroke-width=".7"/></svg>
<div class="panel" style="left:168.3px;top:349.7px;width:585.2px;height:154px"></div>
<div class="a" style="left:168.8px;top:350.2px;width:584.2px;height:17.2px;background:#ececec;"></div>
<div class="a" style="left:168.8px;top:367.3px;width:584.2px;height:0.5px;background:#e0e0e0;"></div>
<div class="a" style="left:520.6px;top:350.2px;width:50.3px;height:17.6px;background:#fff;"></div>
<div class="t b" style="left:173.7px;top:355.0px;color:#8e8e8e">Tcl Console</div>
<div class="t b" style="left:233.0px;top:355.0px;color:#8e8e8e">Messages</div>
<div class="t b" style="left:279.1px;top:355.0px;color:#8e8e8e">Log</div>
<div class="t b" style="left:304.5px;top:355.0px;color:#8e8e8e">Reports</div>
<div class="t b" style="left:346.7px;top:355.0px;color:#8e8e8e">Design Runs</div>
<div class="t b" style="left:405.3px;top:355.0px;color:#8e8e8e">Power</div>
<div class="t b" style="left:439.7px;top:355.0px;color:#8e8e8e">DRC</div>
<div class="t b" style="left:465.2px;top:355.0px;color:#8e8e8e">Methodology</div>
<div class="a" style="left:228.4px;top:352.0px;width:0.5px;height:14.0px;background:#dadada;"></div>
<div class="a" style="left:275.2px;top:352.0px;width:0.5px;height:14.0px;background:#dadada;"></div>
<div class="a" style="left:300.6px;top:352.0px;width:0.5px;height:14.0px;background:#dadada;"></div>
<div class="a" style="left:342.4px;top:352.0px;width:0.5px;height:14.0px;background:#dadada;"></div>
<div class="a" style="left:401.0px;top:352.0px;width:0.5px;height:14.0px;background:#dadada;"></div>
<div class="a" style="left:435.4px;top:352.0px;width:0.5px;height:14.0px;background:#dadada;"></div>
<div class="a" style="left:462.0px;top:352.0px;width:0.5px;height:14.0px;background:#dadada;"></div>
<div class="t b" style="left:524.4px;top:355.0px;">Timing</div>
<svg style="left:562.2px;top:358.1px" width="4.4" height="4.4" viewBox="0 0 4.4 4.4"><path d="M.3 .3L4.1 4.1M4.1 .3L.3 4.1" stroke="#777" stroke-width=".85"/></svg>
<div class="t" style="left:705.9px;top:354.8px;font-size:8.2px;color:#828282;transform:none;font-family:Liberation Sans,sans-serif;font-weight:bold">?</div>
<div class="a" style="left:716.8px;top:361.5px;width:5.4px;height:1.1px;background:#828282;"></div>
<div class="a" style="left:728.6px;top:356.2px;width:5.8px;height:5.8px;border:.8px solid #828282"></div>
<svg style="left:740.5px;top:356.0px" width="6.4" height="6.4" viewBox="0 0 6.4 6.4"><path d="M2.8 .7H.5V5.9H5.7V3.8" fill="none" stroke="#828282" stroke-width=".9"/><path d="M3.4 .5H6V3.1M6 .5L3.2 3.3" fill="none" stroke="#828282" stroke-width=".9"/></svg>
<svg style="left:175.3px;top:372.5px" width="10" height="10" viewBox="0 0 10 10"><circle cx="4.2" cy="4.2" r="3.1" fill="none" stroke="#2b4a8f" stroke-width="1.1"/><path d="M6.5 6.5L9.2 9.2" stroke="#2b4a8f" stroke-width="1.4"/></svg>
<div class="a" style="left:190.5px;top:371.5px;width:0.5px;height:12.0px;background:#d5d5d5;"></div>
<svg style="left:196.5px;top:372.5px" width="9" height="10" viewBox="0 0 9 10"><g fill="#2b4a8f"><path d="M1.2 .9H7.8L4.5 4Z"/><rect x=".8" y="4.5" width="7.4" height="1.1"/><path d="M1.2 9.2H7.8L4.5 6.1Z"/></g></svg>
<svg style="left:217.2px;top:372.5px" width="9" height="10" viewBox="0 0 9 10"><g fill="#2b4a8f"><path d="M1.2 3.8H7.8L4.5 .7Z"/><rect x=".8" y="4.5" width="7.4" height="1.1"/><path d="M1.2 6.3H7.8L4.5 9.4Z"/></g></svg>
<div class="a" style="left:231.9px;top:371.5px;width:0.5px;height:12.0px;background:#d5d5d5;"></div>
<div class="a" style="left:238.4px;top:373.5px;width:8px;height:8px;border-radius:50%;background:#bdbdbd"></div>
<div class="a" style="left:252.6px;top:371.5px;width:0.5px;height:12.0px;background:#d5d5d5;"></div>
<div class="a" style="left:191.8px;top:414.4px;width:77.0px;height:13.1px;background:#c9dcf8;"></div>
<div class="t" style="left:192.0px;top:390.3px;">General Information</div>
<div class="t" style="left:192.0px;top:403.4px;">Timer Settings</div>
<div class="t" style="left:192.0px;top:416.4px;">Design Timing Summary</div>
<div class="t" style="left:192.0px;top:429.5px;">Check Timing</div>
<div class="t" style="left:192.0px;top:442.6px;">User Ignored Paths</div>
<div class="t" style="left:192.0px;top:455.6px;">Unconstrained Paths</div>
<div class="t g" style="left:238.3px;top:429.5px;">(53)</div>
<svg style="left:175.2px;top:430.9px" width="4" height="6" viewBox="0 0 4 6"><path d="M.8 .6L3.2 3L.8 5.4" fill="none" stroke="#666" stroke-width="0.8"/></svg>
<svg style="left:182.5px;top:430.9px" width="7" height="6" viewBox="0 0 7 6"><path d="M.4 .8H2.8L3.5 1.6H6.6V5.6H.4Z" fill="#e4e4e4" stroke="#bdbdbd" stroke-width=".5"/></svg>
<div class="a" style="left:187.5px;top:434.2px;width:2.6px;height:2.6px;border-radius:50%;background:#f0a030"></div>
<div class="a" style="left:290.0px;top:367.8px;width:0.5px;height:119.5px;background:#dcdcdc;"></div>
<div class="a" style="left:168.8px;top:386.7px;width:121.2px;height:0.5px;background:#e2e2e2;"></div>
<div class="a" style="left:211.3px;top:371.5px;width:0.5px;height:12.0px;background:#d5d5d5;"></div>
<svg style="left:285.4px;top:374.0px" width="4.2" height="6.4" viewBox="0 0 4.2 6.4"><path d="M3.8 .3L.4 3.2L3.8 6.1Z" fill="#111"/></svg>
<svg style="left:285.6px;top:382.6px" width="4.2" height="6.4" viewBox="0 0 4.2 6.4"><path d="M.4 .3L3.8 3.2L.4 6.1Z" fill="#111"/></svg>
<div class="t b" style="left:294.0px;top:373.1px;">Design Timing Summary</div>
<div class="a" style="left:290.5px;top:387.2px;width:454.0px;height:0.5px;background:#dcdcdc;"></div>
<div class="t b" style="left:299.8px;top:400.1px;">Setup</div>
<div class="a" style="left:299.8px;top:410.5px;width:131.0px;height:0.6px;background:#d4d4d4;"></div>
<div class="t b" style="left:442.4px;top:400.1px;">Hold</div>
<div class="a" style="left:442.4px;top:410.5px;width:132.0px;height:0.6px;background:#d4d4d4;"></div>
<div class="t b" style="left:585.5px;top:400.1px;">Pulse Width</div>
<div class="a" style="left:585.5px;top:410.5px;width:159.0px;height:0.6px;background:#d4d4d4;"></div>
<div class="t" style="left:312.3px;top:416.9px;">Worst Negative Slack (WNS):</div>
<div class="t" style="left:420.2px;top:416.9px;">NA</div>
<div class="t" style="left:312.3px;top:431.2px;">Total Negative Slack (TNS):</div>
<div class="t" style="left:420.2px;top:431.2px;">NA</div>
<div class="t" style="left:312.3px;top:445.5px;">Number of Failing Endpoints:</div>
<div class="t" style="left:420.2px;top:445.5px;">NA</div>
<div class="t" style="left:312.3px;top:459.8px;">Total Number of Endpoints:</div>
<div class="t" style="left:420.2px;top:459.8px;">NA</div>
<div class="t" style="left:455.0px;top:416.9px;">Worst Hold Slack (WHS):</div>
<div class="t" style="left:563.4px;top:416.9px;">NA</div>
<div class="t" style="left:455.0px;top:431.2px;">Total Hold Slack (THS):</div>
<div class="t" style="left:563.4px;top:431.2px;">NA</div>
<div class="t" style="left:455.0px;top:445.5px;">Number of Failing Endpoints:</div>
<div class="t" style="left:563.4px;top:445.5px;">NA</div>
<div class="t" style="left:455.0px;top:459.8px;">Total Number of Endpoints:</div>
<div class="t" style="left:563.4px;top:459.8px;">NA</div>
<div class="t" style="left:598.0px;top:416.9px;">Worst Pulse Width Slack (WPWS):</div>
<div class="t" style="left:598.0px;top:431.2px;">Total Pulse Width Negative Slack (TPWS):</div>
<div class="t" style="left:598.0px;top:445.5px;">Number of Failing Endpoints:</div>
<div class="t" style="left:598.0px;top:459.8px;">Total Number of Endpoints:</div>
<div class="a" style="left:290px;top:474px;width:454px;height:4.2px;overflow:hidden"><div class="t b" style="left:9.8px;top:0px">There are no user specified timing constraints.</div></div>
<div class="a" style="left:744.5px;top:387.7px;width:0.5px;height:91.5px;background:#e4e4e4;"></div>
<svg style="left:745.2px;top:390.4px" width="5.6" height="3.6" viewBox="0 0 5.6 3.6"><path d="M.5 3L2.8 .7L5.1 3" fill="none" stroke="#4a4a4a" stroke-width="1.1"/></svg>
<svg style="left:745.2px;top:473.7px" width="5.6" height="3.6" viewBox="0 0 5.6 3.6"><path d="M.5 .6L2.8 2.9L5.1 .6" fill="none" stroke="#4a4a4a" stroke-width="1.1"/></svg>
<div class="sb" style="left:746px;top:399.3px;width:4px;height:59px"></div>
<div class="a" style="left:290.5px;top:479.2px;width:462.5px;height:0.5px;background:#ececec;"></div>
<svg style="left:293.8px;top:480.7px" width="3.6" height="5.6" viewBox="0 0 3.6 5.6"><path d="M3 .5L.7 2.8L3 5.1" fill="none" stroke="#4a4a4a" stroke-width="1.1"/></svg>
<svg style="left:737.8px;top:480.7px" width="3.6" height="5.6" viewBox="0 0 3.6 5.6"><path d="M.6 .5L2.9 2.8L.6 5.1" fill="none" stroke="#4a4a4a" stroke-width="1.1"/></svg>
<div class="sb" style="left:300.6px;top:481.2px;width:404px;height:4.6px;background:#bdbdbd"></div>
<div class="a" style="left:744.5px;top:479.5px;width:8.5px;height:8.0px;background:#e6e6e6;"></div>
<div class="a" style="left:168.8px;top:487.1px;width:584.2px;height:.9px;background:repeating-linear-gradient(90deg,#a6a6a6 0 2px,transparent 2px 4.2px)"></div>
<div class="a" style="left:168.8px;top:488.0px;width:584.2px;height:15.2px;background:#f4f4f4;"></div>
<div class="a" style="left:171.7px;top:488px;width:152.5px;height:14.4px;background:#fff;border:.6px solid #d2d2d2;border-top:none"></div>
<div class="t b" style="left:177.2px;top:491.1px;">Timing Summary - impl_1 (saved)</div>
<svg style="left:749.0px;top:508.0px" width="10" height="10" viewBox="0 0 10 10"><rect width="10" height="10" fill="#f6f6f6"/><path d="M1 9.5L9.5 1M4 9.5L9.5 4M7 9.5L9.5 7" stroke="#c0c0c0" stroke-width=".7"/></svg>
<div class="a" style="left:168.3px;top:75.2px;width:214.9px;height:157px;border:.8px solid #d2d2d2"></div>
<div class="a" style="left:168.3px;top:241.2px;width:214.9px;height:99.9px;border:.8px solid #d2d2d2"></div>
<div class="a" style="left:168.3px;top:349.7px;width:585.2px;height:154px;border:.8px solid #d2d2d2"></div>
</body></html>
